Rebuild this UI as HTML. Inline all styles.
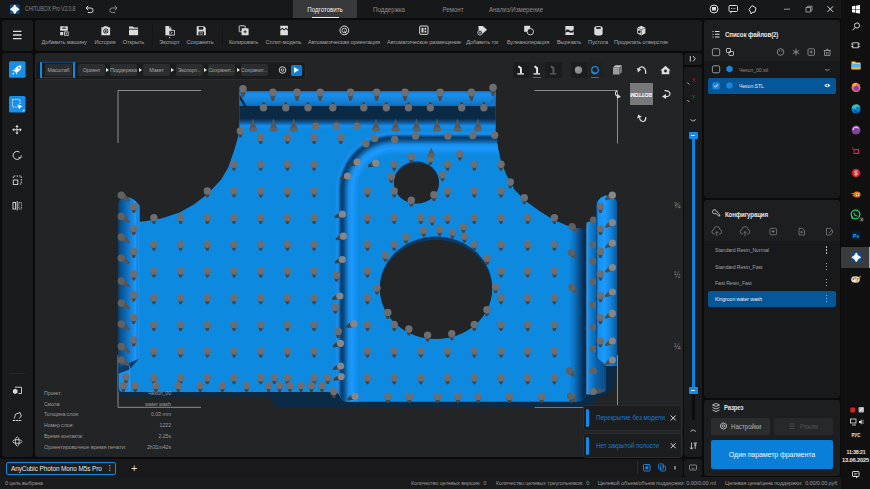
<!DOCTYPE html>
<html lang="ru"><head><meta charset="utf-8"><title>CHITUBOX Pro V2.0.8</title>
<style>

*{box-sizing:border-box;margin:0;padding:0}
html,body{width:870px;height:489px;overflow:hidden;background:#0b0b0c}
body{font-family:"Liberation Sans",sans-serif;color:#a9a9a9;font-size:6px;line-height:1}
#app{position:relative;width:870px;height:489px;overflow:hidden;background:#0b0b0c}
.abs{position:absolute}
.pn{position:absolute;background:#1a1b1d;border-radius:3px}
.t{position:absolute;white-space:nowrap;transform-origin:0 0;transform:scaleX(var(--sx,1))}
.c{transform-origin:50% 0;transform:translateX(-50%) scaleX(var(--sx,1))}
.r{transform-origin:100% 0;transform:translateX(-100%) scaleX(var(--sx,1))}
svg{position:absolute;overflow:visible}
#title{left:0;top:0;width:841px;height:18px;background:#17181a}
#tabact{left:293px;top:0;width:64px;height:18px;background:#38393b}
.tab{top:6px;font-size:7px;color:#8e8e8e;--sx:.875}
.tl{top:40px;font-size:5.6px;color:#a6a6a6;letter-spacing:-0.1px}
.wf{position:absolute;top:64px;height:12px;width:27px;background:#2c2d2f;border-radius:2px;font-size:5.4px;color:#a3a3a3;text-align:center;line-height:12px;white-space:nowrap;overflow:hidden;letter-spacing:-0.15px}
.wa{position:absolute;top:67.5px;width:0;height:0;border-left:3px solid #e8e8e8;border-top:2.5px solid transparent;border-bottom:2.5px solid transparent}
.info{font-size:6px;color:#9b9b9b;letter-spacing:-0.1px;--sx:.885}
.st{top:480.6px;font-size:5.6px;color:#9a9a9a;letter-spacing:-0.1px;--sx:.96}
.li{font-size:6px;color:#a2a2a2;letter-spacing:-0.1px;--sx:.87}
.dots{position:absolute;width:1.3px;height:1.3px;background:#d8d8d8;border-radius:50%;box-shadow:0 3px 0 #d8d8d8,0 6px 0 #d8d8d8}

</style></head>
<body>
<div id="app">
<div class="abs" id="title"></div>
<div class="abs" id="tabact"></div>
<div class="abs" style="left:312px;top:17px;width:27px;height:1px;background:#e6e6e6"></div>
<div class="t" style="left:24.5px;top:6px;font-size:6.3px;color:#858585;letter-spacing:-0.2px;--sx:.835">CHITUBOX Pro V2.0.8</div>
<div class="t tab c" style="left:325px;color:#f0f0f0">Подготовить</div>
<div class="t tab c" style="left:389px">Поддержка</div>
<div class="t tab c" style="left:453px">Ремонт</div>
<div class="t tab c" style="left:516px">Анализ/Измерение</div>
<div class="pn" style="left:2px;top:20px;width:31px;height:30.5px"></div>
<div class="pn" style="left:34.5px;top:20px;width:667.5px;height:30.5px"></div>
<div class="pn" style="left:2px;top:52.5px;width:31px;height:404.5px"></div>
<div class="abs" id="vp" style="left:34.5px;top:52.5px;width:648px;height:404.5px;background:#232426;border-radius:3px;overflow:hidden">
<svg width="870" height="489" viewBox="0 0 870 489" style="left:-34.5px;top:-52.5px">
<defs>
<linearGradient id="gTop" x1="0" y1="0" x2="0" y2="1">
<stop offset="0" stop-color="#0a5a9c"/><stop offset="0.1" stop-color="#1483dc"/><stop offset="0.3" stop-color="#1a8fec"/><stop offset="0.75" stop-color="#137cd0"/><stop offset="1" stop-color="#0e68b0"/></linearGradient>
<linearGradient id="gTop2" x1="0" y1="0" x2="0" y2="1">
<stop offset="0" stop-color="#0b2f50"/><stop offset="0.35" stop-color="#0c5a9c"/><stop offset="0.7" stop-color="#1690f2"/><stop offset="1" stop-color="#0e89e0"/></linearGradient>
<linearGradient id="gLW" x1="0" y1="0" x2="1" y2="0">
<stop offset="0" stop-color="#09406e"/><stop offset="0.12" stop-color="#0a5290"/><stop offset="0.4" stop-color="#0e6fc0"/><stop offset="0.65" stop-color="#1588e4"/><stop offset="0.8" stop-color="#1e98f8"/><stop offset="0.88" stop-color="#1283da"/><stop offset="0.94" stop-color="#178ff0"/><stop offset="1" stop-color="#0e89e0"/></linearGradient>
<linearGradient id="gRG" x1="0" y1="0" x2="1" y2="0">
<stop offset="0" stop-color="#0e89e0"/><stop offset="0.3" stop-color="#0c72c0"/><stop offset="0.6" stop-color="#094c86"/><stop offset="0.85" stop-color="#062e54"/><stop offset="1" stop-color="#052848"/></linearGradient>
<linearGradient id="gRI" gradientUnits="userSpaceOnUse" x1="586.5" y1="0" x2="606" y2="0">
<stop offset="0" stop-color="#2aa2ff"/><stop offset="0.12" stop-color="#1488e2"/><stop offset="0.28" stop-color="#0e78c8"/><stop offset="0.5" stop-color="#0b62a8"/><stop offset="1" stop-color="#0a4a84"/></linearGradient>
<linearGradient id="gRW" x1="0" y1="0" x2="1" y2="0">
<stop offset="0" stop-color="#0c6cb8"/><stop offset="0.1" stop-color="#1490ee"/><stop offset="0.4" stop-color="#1c9aff"/><stop offset="0.7" stop-color="#1282d8"/><stop offset="1" stop-color="#0a5898"/></linearGradient>
<linearGradient id="gRV" x1="0" y1="0" x2="1" y2="0"><stop offset="0.000" stop-color="#0e89e0"/><stop offset="0.060" stop-color="#1288e2"/><stop offset="0.120" stop-color="#1a90ea"/><stop offset="0.180" stop-color="#1584dc"/><stop offset="0.240" stop-color="#0c5a9c"/><stop offset="0.300" stop-color="#0a3d6e"/><stop offset="0.360" stop-color="#0a4274"/><stop offset="0.460" stop-color="#0e62a8"/><stop offset="0.580" stop-color="#178ee8"/><stop offset="0.720" stop-color="#1c9aff"/><stop offset="0.860" stop-color="#1590f0"/><stop offset="1.000" stop-color="#0e89e0"/></linearGradient>
<linearGradient id="gRH" x1="0" y1="0" x2="0" y2="1"><stop offset="0.000" stop-color="#0e89e0"/><stop offset="0.060" stop-color="#1288e2"/><stop offset="0.120" stop-color="#1a90ea"/><stop offset="0.180" stop-color="#1584dc"/><stop offset="0.240" stop-color="#0c5a9c"/><stop offset="0.300" stop-color="#0a3d6e"/><stop offset="0.360" stop-color="#0a4274"/><stop offset="0.460" stop-color="#0e62a8"/><stop offset="0.580" stop-color="#178ee8"/><stop offset="0.720" stop-color="#1c9aff"/><stop offset="0.860" stop-color="#1590f0"/><stop offset="1.000" stop-color="#0e89e0"/></linearGradient>
<radialGradient id="gRC" gradientUnits="userSpaceOnUse" cx="394" cy="190" r="60"><stop offset="0.5833" stop-color="#0e89e0"/><stop offset="0.6417" stop-color="#1590f0"/><stop offset="0.7000" stop-color="#1c9aff"/><stop offset="0.7583" stop-color="#178ee8"/><stop offset="0.8083" stop-color="#0e62a8"/><stop offset="0.8500" stop-color="#0a4274"/><stop offset="0.8750" stop-color="#0a3d6e"/><stop offset="0.9000" stop-color="#0c5a9c"/><stop offset="0.9250" stop-color="#1584dc"/><stop offset="0.9500" stop-color="#1a90ea"/><stop offset="0.9750" stop-color="#1288e2"/><stop offset="1.0000" stop-color="#0e89e0"/></radialGradient>
<filter id="b1" x="-20%" y="-20%" width="140%" height="140%"><feGaussianBlur stdDeviation="1.4"/></filter>
<filter id="b2" x="-20%" y="-20%" width="140%" height="140%"><feGaussianBlur stdDeviation="2.2"/></filter>
<clipPath id="body"><path id="bodyp" d="M239.500 91H495.500V134L496.400 138 498.300 150 500.900 160.400 506.100 174.300 514.800 190 526.900 202.100 539.100 210.800 553 219.500 566.900 225.600 577.300 228.600 586.500 229.300V393Q585 401.800 574 401.800H348Q341 401.500 339 394.500Q338 392 335 392H124.500Q118.700 392 118.700 386V222L138.700 221.800 144.800 221.300 162.100 218.300 179.500 212.600 193.400 204.800 207.300 194.300 221.200 179.500 228.200 167.400 234.300 150 238 137 239.500 128Z"/></clipPath>
</defs>
<path d="M118 143V90.500H201M534.500 90.500H617.500V143.500M118 355V407.300H201M534.500 407.300H617.500V355" fill="none" stroke="#8c8c8c" stroke-width="1"/>
<path d="M119 380V390Q119 396.500 125 396.500H267L277 407H582Q596 406.500 597 397L600 396.500Q616 394 616.500 374V366H606L586.500 380Z" fill="#0b2a46"/>
<path d="M239.500 91H495.500V134L496.400 138 498.300 150 500.900 160.400 506.100 174.300 514.800 190 526.900 202.100 539.100 210.800 553 219.500 566.900 225.600 577.300 228.600 586.500 229.300V393Q585 401.800 574 401.800H348Q341 401.500 339 394.500Q338 392 335 392H124.500Q118.700 392 118.700 386V222L138.700 221.800 144.800 221.300 162.100 218.300 179.500 212.600 193.400 204.800 207.300 194.300 221.200 179.500 228.200 167.400 234.300 150 238 137 239.500 128Z" fill="#0e89e0"/>
<g clip-path="url(#body)">
<rect x="239" y="90.500" width="258" height="16" fill="url(#gTop)"/>
<rect x="239" y="106" width="258" height="13.500" fill="#0b2a46"/>
<rect x="239" y="119" width="258" height="10" fill="url(#gTop2)"/>
<path d="M239.500 94L247.500 107.500L245 108L239.500 99Z" fill="#0b2a46"/>
<path d="M495.500 94L488 106.500H495.500Z" fill="#1a74c0"/>
<rect x="334" y="189.500" width="25" height="222" fill="url(#gRV)"/>
<rect x="393.500" y="130" width="110" height="25" fill="url(#gRH)"/>
<path d="M334 190V130H394V190Z" fill="url(#gRC)"/>
<rect x="569" y="215" width="17.500" height="195" fill="url(#gRG)"/>
</g>
<ellipse cx="416.500" cy="182.300" rx="22.600" ry="21" fill="#0b3a66"/>
<ellipse cx="416.500" cy="183.300" rx="22.400" ry="20.300" fill="#232426"/>
<ellipse cx="436" cy="287.500" rx="56.200" ry="51" fill="#0b3a66"/>
<ellipse cx="436" cy="289.500" rx="56" ry="49.500" fill="#232426"/>
<path d="M118.200 392V204Q118.500 198 125.500 196.800Q134 197 139.800 206V392Z" fill="url(#gLW)"/>
<path d="M118.700 367.500L139.500 358.500L130 369.500L118.700 373.500Z" fill="#0b3c6a"/>
<path d="M118.700 373.500L130 369.500L139.500 358.500V392H124Q118.700 392 118.700 386Z" fill="#1590f0"/>
<path d="M130 392V369.500L139.500 358.500V392Z" fill="#0e89e0"/>
<path d="M129.700 366V391" stroke="#3aa4ff" stroke-width="0.800"/>
<path d="M586.500 394.500V225Q586.500 221.300 591 221.300H596.700V358L606 366V391Q600 394.500 592 394.500Z" fill="url(#gRI)"/>
<circle cx="593.3" cy="219.9" r="3.5" fill="#606264"/>
<circle cx="593.3" cy="244.6" r="3.5" fill="#606264"/>
<circle cx="593.3" cy="261.3" r="3.5" fill="#606264"/>
<circle cx="593.3" cy="281.4" r="3.5" fill="#606264"/>
<circle cx="593.3" cy="304.7" r="3.5" fill="#606264"/>
<circle cx="593.3" cy="327" r="3.5" fill="#606264"/>
<circle cx="593.3" cy="349" r="3.5" fill="#606264"/>
<circle cx="593.3" cy="371" r="3.5" fill="#606264"/>
<path d="M596.200 358V205Q597 198.500 605.200 195.400Q614 196 617 201V366H606Z" fill="url(#gRW)"/>
<path d="M596.700 200V358L606 366" fill="none" stroke="#0a3d6e" stroke-width="0.800"/>
<path d="M586.800 222V394" stroke="#5a7f9e" stroke-width="0.500"/>
<circle cx="394.7" cy="139.5" r="3.7" fill="#6c6e71"/>
<circle cx="415.6" cy="136" r="3.7" fill="#6c6e71"/>
<circle cx="447.8" cy="136" r="3.7" fill="#6c6e71"/>
<circle cx="472.8" cy="135.5" r="3.7" fill="#6c6e71"/>
<circle cx="494.7" cy="135.3" r="3.7" fill="#6c6e71"/>
<circle cx="365.9" cy="143.7" r="3.7" fill="#6c6e71"/>
<circle cx="374.6" cy="138.5" r="3.7" fill="#6c6e71"/>
<path d="M236.9 131.0L239.4 137.5L241.4 137.5L243.9 131.0Z" fill="#424446"/><circle cx="240.4" cy="131.0" r="3.7" fill="#6c6e71"/>
<path d="M257.2 137.5L259.7 144.0L261.7 144.0L264.2 137.5Z" fill="#424446"/><circle cx="260.7" cy="137.5" r="3.7" fill="#6c6e71"/>
<path d="M283.9 137.5L286.4 144.0L288.4 144.0L290.9 137.5Z" fill="#424446"/><circle cx="287.4" cy="137.5" r="3.7" fill="#6c6e71"/>
<path d="M310.6 137.5L313.1 144.0L315.1 144.0L317.6 137.5Z" fill="#424446"/><circle cx="314.1" cy="137.5" r="3.7" fill="#6c6e71"/>
<path d="M337.3 137.5L339.8 144.0L341.8 144.0L344.3 137.5Z" fill="#424446"/><circle cx="340.8" cy="137.5" r="3.7" fill="#6c6e71"/>
<path d="M456.4 153.9L458.9 160.4L460.9 160.4L463.4 153.9Z" fill="#424446"/><circle cx="459.9" cy="153.9" r="3.7" fill="#6c6e71"/>
<path d="M407.8 156.5L410.3 163.0L412.3 163.0L414.8 156.5Z" fill="#424446"/><circle cx="411.3" cy="156.5" r="3.7" fill="#6c6e71"/>
<path d="M426.9 158.6L429.4 165.1L431.4 165.1L433.9 158.6Z" fill="#424446"/><circle cx="430.4" cy="158.6" r="3.7" fill="#6c6e71"/>
<path d="M230.5 164.2L233.0 170.7L235.0 170.7L237.5 164.2Z" fill="#424446"/><circle cx="234.0" cy="164.2" r="3.7" fill="#6c6e71"/>
<path d="M257.2 164.2L259.7 170.7L261.7 170.7L264.2 164.2Z" fill="#424446"/><circle cx="260.7" cy="164.2" r="3.7" fill="#6c6e71"/>
<path d="M283.9 164.2L286.4 170.7L288.4 170.7L290.9 164.2Z" fill="#424446"/><circle cx="287.4" cy="164.2" r="3.7" fill="#6c6e71"/>
<path d="M310.6 164.2L313.1 170.7L315.1 170.7L317.6 164.2Z" fill="#424446"/><circle cx="314.1" cy="164.2" r="3.7" fill="#6c6e71"/>
<path d="M390.7 164.2L393.2 170.7L395.2 170.7L397.7 164.2Z" fill="#424446"/><circle cx="394.2" cy="164.2" r="3.7" fill="#6c6e71"/>
<path d="M444.1 164.2L446.6 170.7L448.6 170.7L451.1 164.2Z" fill="#424446"/><circle cx="447.6" cy="164.2" r="3.7" fill="#6c6e71"/>
<path d="M470.8 164.2L473.3 170.7L475.3 170.7L477.8 164.2Z" fill="#424446"/><circle cx="474.3" cy="164.2" r="3.7" fill="#6c6e71"/>
<path d="M497.5 164.2L500.0 170.7L502.0 170.7L504.5 164.2Z" fill="#424446"/><circle cx="501.0" cy="164.2" r="3.7" fill="#6c6e71"/>
<path d="M439.0 174.8L441.5 181.3L443.5 181.3L446.0 174.8Z" fill="#424446"/><circle cx="442.5" cy="174.8" r="3.7" fill="#6c6e71"/>
<path d="M387.8 176.5L390.3 183.0L392.3 183.0L394.8 176.5Z" fill="#424446"/><circle cx="391.3" cy="176.5" r="3.7" fill="#6c6e71"/>
<path d="M506.8 182.0L509.3 188.5L511.3 188.5L513.8 182.0Z" fill="#424446"/><circle cx="510.3" cy="182.0" r="3.7" fill="#6c6e71"/>
<path d="M203.8 190.9L206.3 197.4L208.3 197.4L210.8 190.9Z" fill="#424446"/><circle cx="207.3" cy="190.9" r="3.7" fill="#6c6e71"/>
<path d="M230.5 190.9L233.0 197.4L235.0 197.4L237.5 190.9Z" fill="#424446"/><circle cx="234.0" cy="190.9" r="3.7" fill="#6c6e71"/>
<path d="M257.2 190.9L259.7 197.4L261.7 197.4L264.2 190.9Z" fill="#424446"/><circle cx="260.7" cy="190.9" r="3.7" fill="#6c6e71"/>
<path d="M283.9 190.9L286.4 197.4L288.4 197.4L290.9 190.9Z" fill="#424446"/><circle cx="287.4" cy="190.9" r="3.7" fill="#6c6e71"/>
<path d="M310.6 190.9L313.1 197.4L315.1 197.4L317.6 190.9Z" fill="#424446"/><circle cx="314.1" cy="190.9" r="3.7" fill="#6c6e71"/>
<path d="M364.0 190.9L366.5 197.4L368.5 197.4L371.0 190.9Z" fill="#424446"/><circle cx="367.5" cy="190.9" r="3.7" fill="#6c6e71"/>
<path d="M390.7 190.9L393.2 197.4L395.2 197.4L397.7 190.9Z" fill="#424446"/><circle cx="394.2" cy="190.9" r="3.7" fill="#6c6e71"/>
<path d="M444.1 190.9L446.6 197.4L448.6 197.4L451.1 190.9Z" fill="#424446"/><circle cx="447.6" cy="190.9" r="3.7" fill="#6c6e71"/>
<path d="M470.8 190.9L473.3 197.4L475.3 197.4L477.8 190.9Z" fill="#424446"/><circle cx="474.3" cy="190.9" r="3.7" fill="#6c6e71"/>
<path d="M497.5 190.9L500.0 197.4L502.0 197.4L504.5 190.9Z" fill="#424446"/><circle cx="501.0" cy="190.9" r="3.7" fill="#6c6e71"/>
<path d="M430.4 194.7L432.9 201.2L434.9 201.2L437.4 194.7Z" fill="#424446"/><circle cx="433.9" cy="194.7" r="3.7" fill="#6c6e71"/>
<path d="M520.8 197.8L523.3 204.3L525.3 204.3L527.8 197.8Z" fill="#424446"/><circle cx="524.3" cy="197.8" r="3.7" fill="#6c6e71"/>
<path d="M407.8 200.3L410.3 206.8L412.3 206.8L414.8 200.3Z" fill="#424446"/><circle cx="411.3" cy="200.3" r="3.7" fill="#6c6e71"/>
<path d="M130.3 206.5L132.8 213.0L134.8 213.0L137.3 206.5Z" fill="#424446"/><circle cx="133.8" cy="206.5" r="3.7" fill="#6c6e71"/>
<path d="M597.0 206.5L599.5 213.0L601.5 213.0L604.0 206.5Z" fill="#424446"/><circle cx="600.5" cy="206.5" r="3.7" fill="#6c6e71"/>
<path d="M150.4 217.6L152.9 224.1L154.9 224.1L157.4 217.6Z" fill="#424446"/><circle cx="153.9" cy="217.6" r="3.7" fill="#6c6e71"/>
<path d="M177.1 217.6L179.6 224.1L181.6 224.1L184.1 217.6Z" fill="#424446"/><circle cx="180.6" cy="217.6" r="3.7" fill="#6c6e71"/>
<path d="M203.8 217.6L206.3 224.1L208.3 224.1L210.8 217.6Z" fill="#424446"/><circle cx="207.3" cy="217.6" r="3.7" fill="#6c6e71"/>
<path d="M230.5 217.6L233.0 224.1L235.0 224.1L237.5 217.6Z" fill="#424446"/><circle cx="234.0" cy="217.6" r="3.7" fill="#6c6e71"/>
<path d="M257.2 217.6L259.7 224.1L261.7 224.1L264.2 217.6Z" fill="#424446"/><circle cx="260.7" cy="217.6" r="3.7" fill="#6c6e71"/>
<path d="M283.9 217.6L286.4 224.1L288.4 224.1L290.9 217.6Z" fill="#424446"/><circle cx="287.4" cy="217.6" r="3.7" fill="#6c6e71"/>
<path d="M310.6 217.6L313.1 224.1L315.1 224.1L317.6 217.6Z" fill="#424446"/><circle cx="314.1" cy="217.6" r="3.7" fill="#6c6e71"/>
<path d="M364.0 217.6L366.5 224.1L368.5 224.1L371.0 217.6Z" fill="#424446"/><circle cx="367.5" cy="217.6" r="3.7" fill="#6c6e71"/>
<path d="M390.7 217.6L393.2 224.1L395.2 224.1L397.7 217.6Z" fill="#424446"/><circle cx="394.2" cy="217.6" r="3.7" fill="#6c6e71"/>
<path d="M417.4 217.6L419.9 224.1L421.9 224.1L424.4 217.6Z" fill="#424446"/><circle cx="420.9" cy="217.6" r="3.7" fill="#6c6e71"/>
<path d="M444.1 217.6L446.6 224.1L448.6 224.1L451.1 217.6Z" fill="#424446"/><circle cx="447.6" cy="217.6" r="3.7" fill="#6c6e71"/>
<path d="M470.8 217.6L473.3 224.1L475.3 224.1L477.8 217.6Z" fill="#424446"/><circle cx="474.3" cy="217.6" r="3.7" fill="#6c6e71"/>
<path d="M497.5 217.6L500.0 224.1L502.0 224.1L504.5 217.6Z" fill="#424446"/><circle cx="501.0" cy="217.6" r="3.7" fill="#6c6e71"/>
<path d="M524.2 217.6L526.7 224.1L528.7 224.1L531.2 217.6Z" fill="#424446"/><circle cx="527.7" cy="217.6" r="3.7" fill="#6c6e71"/>
<path d="M550.9 217.6L553.4 224.1L555.4 224.1L557.9 217.6Z" fill="#424446"/><circle cx="554.4" cy="217.6" r="3.7" fill="#6c6e71"/>
<path d="M428.8 219.1L431.3 225.6L433.3 225.6L435.8 219.1Z" fill="#424446"/><circle cx="432.3" cy="219.1" r="3.7" fill="#6c6e71"/>
<path d="M459.9 226.6L462.4 233.1L464.4 233.1L466.9 226.6Z" fill="#424446"/><circle cx="463.4" cy="226.6" r="3.7" fill="#6c6e71"/>
<path d="M130.3 228.6L132.8 235.1L134.8 235.1L137.3 228.6Z" fill="#424446"/><circle cx="133.8" cy="228.6" r="3.7" fill="#6c6e71"/>
<path d="M597.0 228.6L599.5 235.1L601.5 235.1L604.0 228.6Z" fill="#424446"/><circle cx="600.5" cy="228.6" r="3.7" fill="#6c6e71"/>
<path d="M436.2 229.4L438.7 235.9L440.7 235.9L443.2 229.4Z" fill="#424446"/><circle cx="439.7" cy="229.4" r="3.7" fill="#6c6e71"/>
<path d="M420.2 230.2L422.7 236.7L424.7 236.7L427.2 230.2Z" fill="#424446"/><circle cx="423.7" cy="230.2" r="3.7" fill="#6c6e71"/>
<path d="M448.9 232.1L451.4 238.6L453.4 238.6L455.9 232.1Z" fill="#424446"/><circle cx="452.4" cy="232.1" r="3.7" fill="#6c6e71"/>
<path d="M461.0 236.3L463.5 242.8L465.5 242.8L468.0 236.3Z" fill="#424446"/><circle cx="464.5" cy="236.3" r="3.7" fill="#6c6e71"/>
<path d="M402.5 237.0L405.0 243.5L407.0 243.5L409.5 237.0Z" fill="#424446"/><circle cx="406.0" cy="237.0" r="3.7" fill="#6c6e71"/>
<path d="M150.4 244.3L152.9 250.8L154.9 250.8L157.4 244.3Z" fill="#424446"/><circle cx="153.9" cy="244.3" r="3.7" fill="#6c6e71"/>
<path d="M177.1 244.3L179.6 250.8L181.6 250.8L184.1 244.3Z" fill="#424446"/><circle cx="180.6" cy="244.3" r="3.7" fill="#6c6e71"/>
<path d="M203.8 244.3L206.3 250.8L208.3 250.8L210.8 244.3Z" fill="#424446"/><circle cx="207.3" cy="244.3" r="3.7" fill="#6c6e71"/>
<path d="M230.5 244.3L233.0 250.8L235.0 250.8L237.5 244.3Z" fill="#424446"/><circle cx="234.0" cy="244.3" r="3.7" fill="#6c6e71"/>
<path d="M257.2 244.3L259.7 250.8L261.7 250.8L264.2 244.3Z" fill="#424446"/><circle cx="260.7" cy="244.3" r="3.7" fill="#6c6e71"/>
<path d="M283.9 244.3L286.4 250.8L288.4 250.8L290.9 244.3Z" fill="#424446"/><circle cx="287.4" cy="244.3" r="3.7" fill="#6c6e71"/>
<path d="M310.6 244.3L313.1 250.8L315.1 250.8L317.6 244.3Z" fill="#424446"/><circle cx="314.1" cy="244.3" r="3.7" fill="#6c6e71"/>
<path d="M364.0 244.3L366.5 250.8L368.5 250.8L371.0 244.3Z" fill="#424446"/><circle cx="367.5" cy="244.3" r="3.7" fill="#6c6e71"/>
<path d="M390.7 244.3L393.2 250.8L395.2 250.8L397.7 244.3Z" fill="#424446"/><circle cx="394.2" cy="244.3" r="3.7" fill="#6c6e71"/>
<path d="M470.8 244.3L473.3 250.8L475.3 250.8L477.8 244.3Z" fill="#424446"/><circle cx="474.3" cy="244.3" r="3.7" fill="#6c6e71"/>
<path d="M497.5 244.3L500.0 250.8L502.0 250.8L504.5 244.3Z" fill="#424446"/><circle cx="501.0" cy="244.3" r="3.7" fill="#6c6e71"/>
<path d="M524.2 244.3L526.7 250.8L528.7 250.8L531.2 244.3Z" fill="#424446"/><circle cx="527.7" cy="244.3" r="3.7" fill="#6c6e71"/>
<path d="M550.9 244.3L553.4 250.8L555.4 250.8L557.9 244.3Z" fill="#424446"/><circle cx="554.4" cy="244.3" r="3.7" fill="#6c6e71"/>
<path d="M130.3 251.5L132.8 258.0L134.8 258.0L137.3 251.5Z" fill="#424446"/><circle cx="133.8" cy="251.5" r="3.7" fill="#6c6e71"/>
<path d="M597.0 251.5L599.5 258.0L601.5 258.0L604.0 251.5Z" fill="#424446"/><circle cx="600.5" cy="251.5" r="3.7" fill="#6c6e71"/>
<path d="M381.8 255.3L384.3 261.8L386.3 261.8L388.8 255.3Z" fill="#424446"/><circle cx="385.3" cy="255.3" r="3.7" fill="#6c6e71"/>
<path d="M483.7 258.3L486.2 264.8L488.2 264.8L490.7 258.3Z" fill="#424446"/><circle cx="487.2" cy="258.3" r="3.7" fill="#6c6e71"/>
<path d="M150.4 271.0L152.9 277.5L154.9 277.5L157.4 271.0Z" fill="#424446"/><circle cx="153.9" cy="271.0" r="3.7" fill="#6c6e71"/>
<path d="M177.1 271.0L179.6 277.5L181.6 277.5L184.1 271.0Z" fill="#424446"/><circle cx="180.6" cy="271.0" r="3.7" fill="#6c6e71"/>
<path d="M203.8 271.0L206.3 277.5L208.3 277.5L210.8 271.0Z" fill="#424446"/><circle cx="207.3" cy="271.0" r="3.7" fill="#6c6e71"/>
<path d="M230.5 271.0L233.0 277.5L235.0 277.5L237.5 271.0Z" fill="#424446"/><circle cx="234.0" cy="271.0" r="3.7" fill="#6c6e71"/>
<path d="M257.2 271.0L259.7 277.5L261.7 277.5L264.2 271.0Z" fill="#424446"/><circle cx="260.7" cy="271.0" r="3.7" fill="#6c6e71"/>
<path d="M283.9 271.0L286.4 277.5L288.4 277.5L290.9 271.0Z" fill="#424446"/><circle cx="287.4" cy="271.0" r="3.7" fill="#6c6e71"/>
<path d="M310.6 271.0L313.1 277.5L315.1 277.5L317.6 271.0Z" fill="#424446"/><circle cx="314.1" cy="271.0" r="3.7" fill="#6c6e71"/>
<path d="M364.0 271.0L366.5 277.5L368.5 277.5L371.0 271.0Z" fill="#424446"/><circle cx="367.5" cy="271.0" r="3.7" fill="#6c6e71"/>
<path d="M497.5 271.0L500.0 277.5L502.0 277.5L504.5 271.0Z" fill="#424446"/><circle cx="501.0" cy="271.0" r="3.7" fill="#6c6e71"/>
<path d="M524.2 271.0L526.7 277.5L528.7 277.5L531.2 271.0Z" fill="#424446"/><circle cx="527.7" cy="271.0" r="3.7" fill="#6c6e71"/>
<path d="M550.9 271.0L553.4 277.5L555.4 277.5L557.9 271.0Z" fill="#424446"/><circle cx="554.4" cy="271.0" r="3.7" fill="#6c6e71"/>
<path d="M130.3 274.0L132.8 280.5L134.8 280.5L137.3 274.0Z" fill="#424446"/><circle cx="133.8" cy="274.0" r="3.7" fill="#6c6e71"/>
<path d="M597.0 274.0L599.5 280.5L601.5 280.5L604.0 274.0Z" fill="#424446"/><circle cx="600.5" cy="274.0" r="3.7" fill="#6c6e71"/>
<path d="M332.9 275.2L335.4 281.7L337.4 281.7L339.9 275.2Z" fill="#424446"/><circle cx="336.4" cy="275.2" r="3.7" fill="#6c6e71"/>
<path d="M492.0 286.8L494.5 293.3L496.5 293.3L499.0 286.8Z" fill="#424446"/><circle cx="495.5" cy="286.8" r="3.7" fill="#6c6e71"/>
<path d="M373.5 288.1L376.0 294.6L378.0 294.6L380.5 288.1Z" fill="#424446"/><circle cx="377.0" cy="288.1" r="3.7" fill="#6c6e71"/>
<path d="M130.3 295.0L132.8 301.5L134.8 301.5L137.3 295.0Z" fill="#424446"/><circle cx="133.8" cy="295.0" r="3.7" fill="#6c6e71"/>
<path d="M597.0 295.7L599.5 302.2L601.5 302.2L604.0 295.7Z" fill="#424446"/><circle cx="600.5" cy="295.7" r="3.7" fill="#6c6e71"/>
<path d="M150.4 297.7L152.9 304.2L154.9 304.2L157.4 297.7Z" fill="#424446"/><circle cx="153.9" cy="297.7" r="3.7" fill="#6c6e71"/>
<path d="M177.1 297.7L179.6 304.2L181.6 304.2L184.1 297.7Z" fill="#424446"/><circle cx="180.6" cy="297.7" r="3.7" fill="#6c6e71"/>
<path d="M203.8 297.7L206.3 304.2L208.3 304.2L210.8 297.7Z" fill="#424446"/><circle cx="207.3" cy="297.7" r="3.7" fill="#6c6e71"/>
<path d="M230.5 297.7L233.0 304.2L235.0 304.2L237.5 297.7Z" fill="#424446"/><circle cx="234.0" cy="297.7" r="3.7" fill="#6c6e71"/>
<path d="M257.2 297.7L259.7 304.2L261.7 304.2L264.2 297.7Z" fill="#424446"/><circle cx="260.7" cy="297.7" r="3.7" fill="#6c6e71"/>
<path d="M283.9 297.7L286.4 304.2L288.4 304.2L290.9 297.7Z" fill="#424446"/><circle cx="287.4" cy="297.7" r="3.7" fill="#6c6e71"/>
<path d="M310.6 297.7L313.1 304.2L315.1 304.2L317.6 297.7Z" fill="#424446"/><circle cx="314.1" cy="297.7" r="3.7" fill="#6c6e71"/>
<path d="M364.0 297.7L366.5 304.2L368.5 304.2L371.0 297.7Z" fill="#424446"/><circle cx="367.5" cy="297.7" r="3.7" fill="#6c6e71"/>
<path d="M497.5 297.7L500.0 304.2L502.0 304.2L504.5 297.7Z" fill="#424446"/><circle cx="501.0" cy="297.7" r="3.7" fill="#6c6e71"/>
<path d="M524.2 297.7L526.7 304.2L528.7 304.2L531.2 297.7Z" fill="#424446"/><circle cx="527.7" cy="297.7" r="3.7" fill="#6c6e71"/>
<path d="M550.9 297.7L553.4 304.2L555.4 304.2L557.9 297.7Z" fill="#424446"/><circle cx="554.4" cy="297.7" r="3.7" fill="#6c6e71"/>
<path d="M331.8 307.2L334.3 313.7L336.3 313.7L338.8 307.2Z" fill="#424446"/><circle cx="335.3" cy="307.2" r="3.7" fill="#6c6e71"/>
<path d="M483.4 309.7L485.9 316.2L487.9 316.2L490.4 309.7Z" fill="#424446"/><circle cx="486.9" cy="309.7" r="3.7" fill="#6c6e71"/>
<path d="M384.3 312.4L386.8 318.9L388.8 318.9L391.3 312.4Z" fill="#424446"/><circle cx="387.8" cy="312.4" r="3.7" fill="#6c6e71"/>
<path d="M130.3 317.6L132.8 324.1L134.8 324.1L137.3 317.6Z" fill="#424446"/><circle cx="133.8" cy="317.6" r="3.7" fill="#6c6e71"/>
<path d="M597.0 317.6L599.5 324.1L601.5 324.1L604.0 317.6Z" fill="#424446"/><circle cx="600.5" cy="317.6" r="3.7" fill="#6c6e71"/>
<path d="M150.4 324.4L152.9 330.9L154.9 330.9L157.4 324.4Z" fill="#424446"/><circle cx="153.9" cy="324.4" r="3.7" fill="#6c6e71"/>
<path d="M177.1 324.4L179.6 330.9L181.6 330.9L184.1 324.4Z" fill="#424446"/><circle cx="180.6" cy="324.4" r="3.7" fill="#6c6e71"/>
<path d="M203.8 324.4L206.3 330.9L208.3 330.9L210.8 324.4Z" fill="#424446"/><circle cx="207.3" cy="324.4" r="3.7" fill="#6c6e71"/>
<path d="M230.5 324.4L233.0 330.9L235.0 330.9L237.5 324.4Z" fill="#424446"/><circle cx="234.0" cy="324.4" r="3.7" fill="#6c6e71"/>
<path d="M257.2 324.4L259.7 330.9L261.7 330.9L264.2 324.4Z" fill="#424446"/><circle cx="260.7" cy="324.4" r="3.7" fill="#6c6e71"/>
<path d="M283.9 324.4L286.4 330.9L288.4 330.9L290.9 324.4Z" fill="#424446"/><circle cx="287.4" cy="324.4" r="3.7" fill="#6c6e71"/>
<path d="M310.6 324.4L313.1 330.9L315.1 330.9L317.6 324.4Z" fill="#424446"/><circle cx="314.1" cy="324.4" r="3.7" fill="#6c6e71"/>
<path d="M364.0 324.4L366.5 330.9L368.5 330.9L371.0 324.4Z" fill="#424446"/><circle cx="367.5" cy="324.4" r="3.7" fill="#6c6e71"/>
<path d="M390.7 324.4L393.2 330.9L395.2 330.9L397.7 324.4Z" fill="#424446"/><circle cx="394.2" cy="324.4" r="3.7" fill="#6c6e71"/>
<path d="M470.8 324.4L473.3 330.9L475.3 330.9L477.8 324.4Z" fill="#424446"/><circle cx="474.3" cy="324.4" r="3.7" fill="#6c6e71"/>
<path d="M497.5 324.4L500.0 330.9L502.0 330.9L504.5 324.4Z" fill="#424446"/><circle cx="501.0" cy="324.4" r="3.7" fill="#6c6e71"/>
<path d="M524.2 324.4L526.7 330.9L528.7 330.9L531.2 324.4Z" fill="#424446"/><circle cx="527.7" cy="324.4" r="3.7" fill="#6c6e71"/>
<path d="M550.9 324.4L553.4 330.9L555.4 330.9L557.9 324.4Z" fill="#424446"/><circle cx="554.4" cy="324.4" r="3.7" fill="#6c6e71"/>
<path d="M405.3 329.0L407.8 335.5L409.8 335.5L412.3 329.0Z" fill="#424446"/><circle cx="408.8" cy="329.0" r="3.7" fill="#6c6e71"/>
<path d="M334.6 331.5L337.1 338.0L339.1 338.0L341.6 331.5Z" fill="#424446"/><circle cx="338.1" cy="331.5" r="3.7" fill="#6c6e71"/>
<path d="M448.3 333.7L450.8 340.2L452.8 340.2L455.3 333.7Z" fill="#424446"/><circle cx="451.8" cy="333.7" r="3.7" fill="#6c6e71"/>
<path d="M424.1 335.1L426.6 341.6L428.6 341.6L431.1 335.1Z" fill="#424446"/><circle cx="427.6" cy="335.1" r="3.7" fill="#6c6e71"/>
<path d="M130.3 340.0L132.8 346.5L134.8 346.5L137.3 340.0Z" fill="#424446"/><circle cx="133.8" cy="340.0" r="3.7" fill="#6c6e71"/>
<path d="M597.0 340.8L599.5 347.3L601.5 347.3L604.0 340.8Z" fill="#424446"/><circle cx="600.5" cy="340.8" r="3.7" fill="#6c6e71"/>
<path d="M150.4 351.1L152.9 357.6L154.9 357.6L157.4 351.1Z" fill="#424446"/><circle cx="153.9" cy="351.1" r="3.7" fill="#6c6e71"/>
<path d="M177.1 351.1L179.6 357.6L181.6 357.6L184.1 351.1Z" fill="#424446"/><circle cx="180.6" cy="351.1" r="3.7" fill="#6c6e71"/>
<path d="M203.8 351.1L206.3 357.6L208.3 357.6L210.8 351.1Z" fill="#424446"/><circle cx="207.3" cy="351.1" r="3.7" fill="#6c6e71"/>
<path d="M230.5 351.1L233.0 357.6L235.0 357.6L237.5 351.1Z" fill="#424446"/><circle cx="234.0" cy="351.1" r="3.7" fill="#6c6e71"/>
<path d="M257.2 351.1L259.7 357.6L261.7 357.6L264.2 351.1Z" fill="#424446"/><circle cx="260.7" cy="351.1" r="3.7" fill="#6c6e71"/>
<path d="M283.9 351.1L286.4 357.6L288.4 357.6L290.9 351.1Z" fill="#424446"/><circle cx="287.4" cy="351.1" r="3.7" fill="#6c6e71"/>
<path d="M310.6 351.1L313.1 357.6L315.1 357.6L317.6 351.1Z" fill="#424446"/><circle cx="314.1" cy="351.1" r="3.7" fill="#6c6e71"/>
<path d="M364.0 351.1L366.5 357.6L368.5 357.6L371.0 351.1Z" fill="#424446"/><circle cx="367.5" cy="351.1" r="3.7" fill="#6c6e71"/>
<path d="M390.7 351.1L393.2 357.6L395.2 357.6L397.7 351.1Z" fill="#424446"/><circle cx="394.2" cy="351.1" r="3.7" fill="#6c6e71"/>
<path d="M417.4 351.1L419.9 357.6L421.9 357.6L424.4 351.1Z" fill="#424446"/><circle cx="420.9" cy="351.1" r="3.7" fill="#6c6e71"/>
<path d="M444.1 351.1L446.6 357.6L448.6 357.6L451.1 351.1Z" fill="#424446"/><circle cx="447.6" cy="351.1" r="3.7" fill="#6c6e71"/>
<path d="M470.8 351.1L473.3 357.6L475.3 357.6L477.8 351.1Z" fill="#424446"/><circle cx="474.3" cy="351.1" r="3.7" fill="#6c6e71"/>
<path d="M497.5 351.1L500.0 357.6L502.0 357.6L504.5 351.1Z" fill="#424446"/><circle cx="501.0" cy="351.1" r="3.7" fill="#6c6e71"/>
<path d="M524.2 351.1L526.7 357.6L528.7 357.6L531.2 351.1Z" fill="#424446"/><circle cx="527.7" cy="351.1" r="3.7" fill="#6c6e71"/>
<path d="M550.9 351.1L553.4 357.6L555.4 357.6L557.9 351.1Z" fill="#424446"/><circle cx="554.4" cy="351.1" r="3.7" fill="#6c6e71"/>
<path d="M122.5 377.0L125.0 383.5L127.0 383.5L129.5 377.0Z" fill="#424446"/><circle cx="126.0" cy="377.0" r="3.7" fill="#6c6e71"/>
<path d="M270.8 377.6L273.3 384.1L275.3 384.1L277.8 377.6Z" fill="#424446"/><circle cx="274.3" cy="377.6" r="3.7" fill="#6c6e71"/>
<path d="M324.2 377.6L326.7 384.1L328.7 384.1L331.2 377.6Z" fill="#424446"/><circle cx="327.7" cy="377.6" r="3.7" fill="#6c6e71"/>
<path d="M150.4 377.8L152.9 384.3L154.9 384.3L157.4 377.8Z" fill="#424446"/><circle cx="153.9" cy="377.8" r="3.7" fill="#6c6e71"/>
<path d="M177.1 377.8L179.6 384.3L181.6 384.3L184.1 377.8Z" fill="#424446"/><circle cx="180.6" cy="377.8" r="3.7" fill="#6c6e71"/>
<path d="M203.8 377.8L206.3 384.3L208.3 384.3L210.8 377.8Z" fill="#424446"/><circle cx="207.3" cy="377.8" r="3.7" fill="#6c6e71"/>
<path d="M230.5 377.8L233.0 384.3L235.0 384.3L237.5 377.8Z" fill="#424446"/><circle cx="234.0" cy="377.8" r="3.7" fill="#6c6e71"/>
<path d="M257.2 377.8L259.7 384.3L261.7 384.3L264.2 377.8Z" fill="#424446"/><circle cx="260.7" cy="377.8" r="3.7" fill="#6c6e71"/>
<path d="M283.9 377.8L286.4 384.3L288.4 384.3L290.9 377.8Z" fill="#424446"/><circle cx="287.4" cy="377.8" r="3.7" fill="#6c6e71"/>
<path d="M310.6 377.8L313.1 384.3L315.1 384.3L317.6 377.8Z" fill="#424446"/><circle cx="314.1" cy="377.8" r="3.7" fill="#6c6e71"/>
<path d="M364.0 377.8L366.5 384.3L368.5 384.3L371.0 377.8Z" fill="#424446"/><circle cx="367.5" cy="377.8" r="3.7" fill="#6c6e71"/>
<path d="M390.7 377.8L393.2 384.3L395.2 384.3L397.7 377.8Z" fill="#424446"/><circle cx="394.2" cy="377.8" r="3.7" fill="#6c6e71"/>
<path d="M417.4 377.8L419.9 384.3L421.9 384.3L424.4 377.8Z" fill="#424446"/><circle cx="420.9" cy="377.8" r="3.7" fill="#6c6e71"/>
<path d="M444.1 377.8L446.6 384.3L448.6 384.3L451.1 377.8Z" fill="#424446"/><circle cx="447.6" cy="377.8" r="3.7" fill="#6c6e71"/>
<path d="M470.8 377.8L473.3 384.3L475.3 384.3L477.8 377.8Z" fill="#424446"/><circle cx="474.3" cy="377.8" r="3.7" fill="#6c6e71"/>
<path d="M497.5 377.8L500.0 384.3L502.0 384.3L504.5 377.8Z" fill="#424446"/><circle cx="501.0" cy="377.8" r="3.7" fill="#6c6e71"/>
<path d="M524.2 377.8L526.7 384.3L528.7 384.3L531.2 377.8Z" fill="#424446"/><circle cx="527.7" cy="377.8" r="3.7" fill="#6c6e71"/>
<path d="M550.9 377.8L553.4 384.3L555.4 384.3L557.9 377.8Z" fill="#424446"/><circle cx="554.4" cy="377.8" r="3.7" fill="#6c6e71"/>
<path d="M119.9 385.6L122.4 392.1L124.4 392.1L126.9 385.6Z" fill="#424446"/><circle cx="123.4" cy="385.6" r="3.7" fill="#6c6e71"/>
<path d="M131.7 385.6L134.2 392.1L136.2 392.1L138.7 385.6Z" fill="#424446"/><circle cx="135.2" cy="385.6" r="3.7" fill="#6c6e71"/>
<path d="M152.4 385.6L154.9 392.1L156.9 392.1L159.4 385.6Z" fill="#424446"/><circle cx="155.9" cy="385.6" r="3.7" fill="#6c6e71"/>
<path d="M174.8 385.6L177.3 392.1L179.3 392.1L181.8 385.6Z" fill="#424446"/><circle cx="178.3" cy="385.6" r="3.7" fill="#6c6e71"/>
<path d="M196.8 385.6L199.3 392.1L201.3 392.1L203.8 385.6Z" fill="#424446"/><circle cx="200.3" cy="385.6" r="3.7" fill="#6c6e71"/>
<path d="M218.9 385.6L221.4 392.1L223.4 392.1L225.9 385.6Z" fill="#424446"/><circle cx="222.4" cy="385.6" r="3.7" fill="#6c6e71"/>
<path d="M243.1 385.6L245.6 392.1L247.6 392.1L250.1 385.6Z" fill="#424446"/><circle cx="246.6" cy="385.6" r="3.7" fill="#6c6e71"/>
<path d="M265.1 385.6L267.6 392.1L269.6 392.1L272.1 385.6Z" fill="#424446"/><circle cx="268.6" cy="385.6" r="3.7" fill="#6c6e71"/>
<path d="M276.2 385.6L278.7 392.1L280.7 392.1L283.2 385.6Z" fill="#424446"/><circle cx="279.7" cy="385.6" r="3.7" fill="#6c6e71"/>
<path d="M286.5 385.6L289.0 392.1L291.0 392.1L293.5 385.6Z" fill="#424446"/><circle cx="290.0" cy="385.6" r="3.7" fill="#6c6e71"/>
<path d="M297.5 385.6L300.0 392.1L302.0 392.1L304.5 385.6Z" fill="#424446"/><circle cx="301.0" cy="385.6" r="3.7" fill="#6c6e71"/>
<path d="M307.9 385.6L310.4 392.1L312.4 392.1L314.9 385.6Z" fill="#424446"/><circle cx="311.4" cy="385.6" r="3.7" fill="#6c6e71"/>
<path d="M318.5 385.6L321.0 392.1L323.0 392.1L325.5 385.6Z" fill="#424446"/><circle cx="322.0" cy="385.6" r="3.7" fill="#6c6e71"/>
<path d="M330.3 391.4L332.8 397.9L334.8 397.9L337.3 391.4Z" fill="#424446"/><circle cx="333.8" cy="391.4" r="3.7" fill="#6c6e71"/>
<path d="M384.5 396.5L387.0 403.0L389.0 403.0L391.5 396.5Z" fill="#424446"/><circle cx="388.0" cy="396.5" r="3.7" fill="#6c6e71"/>
<path d="M405.9 396.5L408.4 403.0L410.4 403.0L412.9 396.5Z" fill="#424446"/><circle cx="409.4" cy="396.5" r="3.7" fill="#6c6e71"/>
<path d="M434.2 396.5L436.7 403.0L438.7 403.0L441.2 396.5Z" fill="#424446"/><circle cx="437.7" cy="396.5" r="3.7" fill="#6c6e71"/>
<path d="M454.5 396.5L457.0 403.0L459.0 403.0L461.5 396.5Z" fill="#424446"/><circle cx="458.0" cy="396.5" r="3.7" fill="#6c6e71"/>
<path d="M474.7 396.5L477.2 403.0L479.2 403.0L481.7 396.5Z" fill="#424446"/><circle cx="478.2" cy="396.5" r="3.7" fill="#6c6e71"/>
<path d="M506.0 396.5L508.5 403.0L510.5 403.0L513.0 396.5Z" fill="#424446"/><circle cx="509.5" cy="396.5" r="3.7" fill="#6c6e71"/>
<path d="M538.3 396.5L540.8 403.0L542.8 403.0L545.3 396.5Z" fill="#424446"/><circle cx="541.8" cy="396.5" r="3.7" fill="#6c6e71"/>
<path d="M567.7 396.5L570.2 403.0L572.2 403.0L574.7 396.5Z" fill="#424446"/><circle cx="571.2" cy="396.5" r="3.7" fill="#6c6e71"/>
<path d="M239.4 88.7L242.0 97.3L244.0 97.3L246.6 88.7Z" fill="#4a4c4e"/><circle cx="243.0" cy="88.7" r="3.8" fill="#6c6e71"/>
<path d="M269.3 92.4L271.9 101.0L273.9 101.0L276.5 92.4Z" fill="#4a4c4e"/><circle cx="272.9" cy="92.4" r="3.8" fill="#6c6e71"/>
<path d="M293.4 92.4L296.0 101.0L298.0 101.0L300.6 92.4Z" fill="#4a4c4e"/><circle cx="297.0" cy="92.4" r="3.8" fill="#6c6e71"/>
<path d="M316.6 92.4L319.2 101.0L321.2 101.0L323.8 92.4Z" fill="#4a4c4e"/><circle cx="320.2" cy="92.4" r="3.8" fill="#6c6e71"/>
<path d="M346.9 92.4L349.5 101.0L351.5 101.0L354.1 92.4Z" fill="#4a4c4e"/><circle cx="350.5" cy="92.4" r="3.8" fill="#6c6e71"/>
<path d="M373.0 92.4L375.6 101.0L377.6 101.0L380.2 92.4Z" fill="#4a4c4e"/><circle cx="376.6" cy="92.4" r="3.8" fill="#6c6e71"/>
<path d="M401.4 92.4L404.0 101.0L406.0 101.0L408.6 92.4Z" fill="#4a4c4e"/><circle cx="405.0" cy="92.4" r="3.8" fill="#6c6e71"/>
<path d="M436.5 92.4L439.1 101.0L441.1 101.0L443.7 92.4Z" fill="#4a4c4e"/><circle cx="440.1" cy="92.4" r="3.8" fill="#6c6e71"/>
<path d="M467.8 92.4L470.4 101.0L472.4 101.0L475.0 92.4Z" fill="#4a4c4e"/><circle cx="471.4" cy="92.4" r="3.8" fill="#6c6e71"/>
<path d="M489.4 87.6L492.0 96.2L494.0 96.2L496.6 87.6Z" fill="#4a4c4e"/><circle cx="493.0" cy="87.6" r="3.8" fill="#6c6e71"/>
<path d="M267.0 107.7L264.5 102.2L262.5 102.2L260.0 107.7Z" fill="#424446"/><circle cx="263.5" cy="107.7" r="3.7" fill="#6c6e71"/>
<path d="M289.3 107.7L286.8 102.2L284.8 102.2L282.3 107.7Z" fill="#424446"/><circle cx="285.8" cy="107.7" r="3.7" fill="#6c6e71"/>
<path d="M311.5 107.7L309.0 102.2L307.0 102.2L304.5 107.7Z" fill="#424446"/><circle cx="308.0" cy="107.7" r="3.7" fill="#6c6e71"/>
<path d="M336.3 107.7L333.8 102.2L331.8 102.2L329.3 107.7Z" fill="#424446"/><circle cx="332.8" cy="107.7" r="3.7" fill="#6c6e71"/>
<path d="M367.3 107.7L364.8 102.2L362.8 102.2L360.3 107.7Z" fill="#424446"/><circle cx="363.8" cy="107.7" r="3.7" fill="#6c6e71"/>
<path d="M389.8 107.7L387.3 102.2L385.3 102.2L382.8 107.7Z" fill="#424446"/><circle cx="386.3" cy="107.7" r="3.7" fill="#6c6e71"/>
<path d="M412.0 107.7L409.5 102.2L407.5 102.2L405.0 107.7Z" fill="#424446"/><circle cx="408.5" cy="107.7" r="3.7" fill="#6c6e71"/>
<path d="M433.9 107.7L431.4 102.2L429.4 102.2L426.9 107.7Z" fill="#424446"/><circle cx="430.4" cy="107.7" r="3.7" fill="#6c6e71"/>
<path d="M465.2 107.7L462.7 102.2L460.7 102.2L458.2 107.7Z" fill="#424446"/><circle cx="461.7" cy="107.7" r="3.7" fill="#6c6e71"/>
<path d="M487.4 107.7L484.9 102.2L482.9 102.2L480.4 107.7Z" fill="#424446"/><circle cx="483.9" cy="107.7" r="3.7" fill="#6c6e71"/>
<path d="M249.0 129.6L253.0 118.6L257.0 129.6Z" fill="#55575a"/><ellipse cx="253.0" cy="129.6" rx="4" ry="2.2" fill="#5f6163"/>
<path d="M269.5 129.6L273.5 118.6L277.5 129.6Z" fill="#55575a"/><ellipse cx="273.5" cy="129.6" rx="4" ry="2.2" fill="#5f6163"/>
<path d="M289.8 129.6L293.8 118.6L297.8 129.6Z" fill="#55575a"/><ellipse cx="293.8" cy="129.6" rx="4" ry="2.2" fill="#5f6163"/>
<path d="M372.0 129.6L376.0 118.6L380.0 129.6Z" fill="#55575a"/><ellipse cx="376.0" cy="129.6" rx="4" ry="2.2" fill="#5f6163"/>
<path d="M391.6 129.6L395.6 118.6L399.6 129.6Z" fill="#55575a"/><ellipse cx="395.6" cy="129.6" rx="4" ry="2.2" fill="#5f6163"/>
<path d="M412.5 129.6L416.5 118.6L420.5 129.6Z" fill="#55575a"/><ellipse cx="416.5" cy="129.6" rx="4" ry="2.2" fill="#5f6163"/>
<path d="M433.0 129.6L437.0 118.6L441.0 129.6Z" fill="#55575a"/><ellipse cx="437.0" cy="129.6" rx="4" ry="2.2" fill="#5f6163"/>
<path d="M453.5 129.6L457.5 118.6L461.5 129.6Z" fill="#55575a"/><ellipse cx="457.5" cy="129.6" rx="4" ry="2.2" fill="#5f6163"/>
<path d="M474.0 129.6L478.0 118.6L482.0 129.6Z" fill="#55575a"/><ellipse cx="478.0" cy="129.6" rx="4" ry="2.2" fill="#5f6163"/>
<path d="M319.1 126.2L316.6 120.2L314.6 120.2L312.1 126.2Z" fill="#424446"/><circle cx="315.6" cy="126.2" r="3.7" fill="#6c6e71"/>
<path d="M339.9 126.2L337.4 120.2L335.4 120.2L332.9 126.2Z" fill="#424446"/><circle cx="336.4" cy="126.2" r="3.7" fill="#6c6e71"/>
<path d="M360.4 126.2L357.9 120.2L355.9 120.2L353.4 126.2Z" fill="#424446"/><circle cx="356.9" cy="126.2" r="3.7" fill="#6c6e71"/>
<path d="M427.6 155.5L431.2 147.5L434.8 155.5Z" fill="#55575a"/><ellipse cx="431.2" cy="155.5" rx="3.6" ry="2.2" fill="#5f6163"/>
<path d="M355.9 159.0L349.3 164.4L350.1 166.2L358.5 165.2Z" fill="#3e4042"/><circle cx="357.2" cy="162.1" r="3.6" fill="#85878a"/>
<path d="M374.3 160.1L367.7 165.5L368.5 167.3L376.9 166.3Z" fill="#3e4042"/><circle cx="375.6" cy="163.2" r="3.6" fill="#85878a"/>
<path d="M346.2 172.9L339.6 178.3L340.4 180.1L348.8 179.1Z" fill="#3e4042"/><circle cx="347.5" cy="176.0" r="3.6" fill="#85878a"/>
<path d="M341.0 211.1L334.4 216.5L335.2 218.3L343.6 217.3Z" fill="#3e4042"/><circle cx="342.3" cy="214.2" r="3.6" fill="#85878a"/>
<path d="M342.0 233.1L335.4 238.5L336.2 240.3L344.6 239.3Z" fill="#3e4042"/><circle cx="343.3" cy="236.2" r="3.6" fill="#85878a"/>
<path d="M341.0 256.4L334.4 261.8L335.2 263.6L343.6 262.6Z" fill="#3e4042"/><circle cx="342.3" cy="259.5" r="3.6" fill="#85878a"/>
<path d="M338.5 292.9L331.9 298.3L332.7 300.1L341.1 299.1Z" fill="#3e4042"/><circle cx="339.8" cy="296.0" r="3.6" fill="#85878a"/>
<path d="M352.4 320.7L345.8 326.1L346.6 327.9L355.0 326.9Z" fill="#3e4042"/><circle cx="353.7" cy="323.8" r="3.6" fill="#85878a"/>
<path d="M339.2 340.2L332.6 345.6L333.4 347.4L341.8 346.4Z" fill="#3e4042"/><circle cx="340.5" cy="343.3" r="3.6" fill="#85878a"/>
<path d="M339.3 362.9L332.7 368.3L333.5 370.1L341.9 369.1Z" fill="#3e4042"/><circle cx="340.6" cy="366.0" r="3.6" fill="#85878a"/>
<path d="M339.9 373.5L333.3 378.9L334.1 380.7L342.5 379.7Z" fill="#3e4042"/><circle cx="341.2" cy="376.6" r="3.6" fill="#85878a"/>
<path d="M353.7 393.2L347.1 398.6L347.9 400.4L356.3 399.4Z" fill="#3e4042"/><circle cx="355.0" cy="396.3" r="3.6" fill="#85878a"/>
<path d="M119.3 198.1L129.0 201.8L130.2 200.2L123.3 192.3Z" fill="#525456"/><circle cx="121.3" cy="195.2" r="3.7" fill="#5e6062"/>
<path d="M119.3 219.3L129.0 223.0L130.2 221.4L123.3 213.5Z" fill="#525456"/><circle cx="121.3" cy="216.4" r="3.7" fill="#5e6062"/>
<path d="M119.3 239.9L129.0 243.6L130.2 242.0L123.3 234.1Z" fill="#525456"/><circle cx="121.3" cy="237.0" r="3.7" fill="#5e6062"/>
<path d="M119.3 260.9L129.0 264.6L130.2 263.0L123.3 255.1Z" fill="#525456"/><circle cx="121.3" cy="258.0" r="3.7" fill="#5e6062"/>
<path d="M119.3 283.9L129.0 287.6L130.2 286.0L123.3 278.1Z" fill="#525456"/><circle cx="121.3" cy="281.0" r="3.7" fill="#5e6062"/>
<path d="M119.3 305.9L129.0 309.6L130.2 308.0L123.3 300.1Z" fill="#525456"/><circle cx="121.3" cy="303.0" r="3.7" fill="#5e6062"/>
<path d="M119.3 326.9L129.0 330.6L130.2 329.0L123.3 321.1Z" fill="#525456"/><circle cx="121.3" cy="324.0" r="3.7" fill="#5e6062"/>
<path d="M119.3 349.4L129.0 353.1L130.2 351.5L123.3 343.6Z" fill="#525456"/><circle cx="121.3" cy="346.5" r="3.7" fill="#5e6062"/>
<path d="M119.3 362.9L129.0 366.6L130.2 365.0L123.3 357.1Z" fill="#525456"/><circle cx="121.3" cy="360.0" r="3.7" fill="#5e6062"/>
<path d="M610.5 192.3L604.8 198.9L605.8 200.5L614.1 198.1Z" fill="#4a4c4e"/><circle cx="612.3" cy="195.2" r="3.6" fill="#85878a"/>
<path d="M610.5 219.8L604.8 226.4L605.8 228.0L614.1 225.6Z" fill="#4a4c4e"/><circle cx="612.3" cy="222.7" r="3.6" fill="#85878a"/>
<path d="M610.5 240.3L604.8 246.9L605.8 248.5L614.1 246.1Z" fill="#4a4c4e"/><circle cx="612.3" cy="243.2" r="3.6" fill="#85878a"/>
<path d="M610.5 264.6L604.8 271.2L605.8 272.8L614.1 270.4Z" fill="#4a4c4e"/><circle cx="612.3" cy="267.5" r="3.6" fill="#85878a"/>
<path d="M610.5 289.1L604.8 295.7L605.8 297.3L614.1 294.9Z" fill="#4a4c4e"/><circle cx="612.3" cy="292.0" r="3.6" fill="#85878a"/>
<path d="M610.5 310.5L604.8 317.1L605.8 318.7L614.1 316.3Z" fill="#4a4c4e"/><circle cx="612.3" cy="313.4" r="3.6" fill="#85878a"/>
<path d="M610.5 338.1L604.8 344.7L605.8 346.3L614.1 343.9Z" fill="#4a4c4e"/><circle cx="612.3" cy="341.0" r="3.6" fill="#85878a"/>
<path d="M610.5 357.1L604.8 363.7L605.8 365.3L614.1 362.9Z" fill="#4a4c4e"/><circle cx="612.3" cy="360.0" r="3.6" fill="#85878a"/>
<path d="M593.4 394.9L604.6 391.0L604.4 389.0L592.6 388.1Z" fill="#505254"/><circle cx="593.0" cy="391.5" r="3.6" fill="#6c6e71"/>
<path d="M568.7 254.9L575.5 258.8L576.9 257.4L573.7 250.3Z" fill="#505254"/><circle cx="571.2" cy="252.6" r="3.6" fill="#5e6062"/>
<path d="M569.4 289.7L576.2 293.6L577.6 292.2L574.4 285.1Z" fill="#505254"/><circle cx="571.9" cy="287.4" r="3.6" fill="#5e6062"/>
<path d="M566.9 373.1L573.7 377.0L575.1 375.6L571.9 368.5Z" fill="#505254"/><circle cx="569.4" cy="370.8" r="3.6" fill="#5e6062"/>
<path d="M568.0 398.3L574.8 402.2L576.2 400.8L573.0 393.7Z" fill="#505254"/><circle cx="570.5" cy="396.0" r="3.6" fill="#5e6062"/>
<path d="M569.6 228.8L576.4 232.7L577.8 231.3L574.6 224.2Z" fill="#505254"/><circle cx="572.1" cy="226.5" r="3.6" fill="#5e6062"/>
</svg>
</div>
<div class="pn" style="left:684.2px;top:52.5px;width:18px;height:12.5px"></div>
<div class="pn" style="left:684.2px;top:67px;width:18px;height:390px"></div>
<div class="pn" style="left:684.2px;top:458.5px;width:18px;height:18px"></div>
<div class="pn" style="left:0;top:458.5px;width:682.5px;height:18px;border-radius:0 3px 3px 0;background:#19191b"></div>
<div class="abs" style="left:0;top:477px;width:841px;height:12px;background:#1a1b1d"></div>
<div class="pn" style="left:704px;top:19.5px;width:136px;height:178px;background:#18191b"><div class="abs" style="left:0;top:0;width:100%;height:41.5px;background:#1d1e20;border-radius:3px 3px 0 0"></div></div>
<div class="pn" style="left:704px;top:200px;width:136px;height:197.5px;background:#18191b"><div class="abs" style="left:0;top:0;width:100%;height:41px;background:#1d1e20;border-radius:3px 3px 0 0"></div></div>
<div class="pn" style="left:704px;top:399.5px;width:136px;height:76.5px;background:#1d1e20"></div>
<div class="abs" style="left:841px;top:0;width:29px;height:489px;background:#101011"></div>
<div class="abs" style="left:841px;top:247px;width:29px;height:21px;background:#3a3b3d"></div>
<div class="abs" style="left:868.5px;top:247px;width:1.5px;height:21px;background:#76b9ed"></div>
<div class="t tl c" style="left:64px">Добавить машину</div>
<div class="t tl c" style="left:105px">История</div>
<div class="t tl c" style="left:133.5px">Открыть</div>
<div class="t tl c" style="left:169.5px">Экспорт</div>
<div class="t tl c" style="left:200px">Сохранить</div>
<div class="t tl c" style="left:243.5px">Копировать</div>
<div class="t tl c" style="left:283.5px">Сплит-модель</div>
<div class="t tl c" style="left:344px">Автоматическая ориентация</div>
<div class="t tl c" style="left:424px">Автоматическое размещение</div>
<div class="t tl c" style="left:482.5px">Добавить тэг</div>
<div class="t tl c" style="left:528px">Булеаноперация</div>
<div class="t tl c" style="left:569px">Вырезать</div>
<div class="t tl c" style="left:598px">Пустота</div>
<div class="t tl c" style="left:641px">Проделать отверстие</div>
<div class="abs" style="left:152px;top:25px;width:1px;height:20px;background:#131415"></div>
<div class="abs" style="left:221.500px;top:25px;width:1px;height:20px;background:#131415"></div>
<div class="abs" style="left:35px;top:60.5px;width:270.5px;height:19px;background:#1b1c1e;border-radius:3px;border:0.5px solid #2a2b2d"></div>
<div class="abs" style="left:40px;top:62px;width:35.5px;height:15.6px;border-top:1px solid #0d4374;border-bottom:1px solid #0d4374"></div>
<div class="abs" style="left:40px;top:62px;width:2.3px;height:15.6px;background:#1489e6;border-radius:1px"></div>
<div class="abs" style="left:73.2px;top:62px;width:2.3px;height:15.6px;background:#1489e6;border-radius:1px"></div>
<div class="wf" style="left:45px">Масштаб</div>
<div class="wf" style="left:78px">Ориент</div>
<div class="wf" style="left:110px">Поддержка</div>
<div class="wf" style="left:143px">Макет</div>
<div class="wf" style="left:175.6px">Экспорт...</div>
<div class="wf" style="left:208px">Сохранит...</div>
<div class="wf" style="left:240.7px">Сохранит...</div>
<div class="wa" style="left:106.2px"></div>
<div class="wa" style="left:138.7px"></div>
<div class="wa" style="left:171.3px"></div>
<div class="wa" style="left:203.9px"></div>
<div class="wa" style="left:236.5px"></div>
<div class="abs" style="left:290.5px;top:64.5px;width:11px;height:11px;background:#0a7fd9;border-radius:1.5px"></div>
<div class="abs" style="left:294px;top:67px;width:0;height:0;border-left:5px solid #fff;border-top:3px solid transparent;border-bottom:3px solid transparent"></div>
<div class="abs" style="left:512.5px;top:62px;width:49px;height:16px;background:#1b1c1e;border-radius:2px"></div>
<div class="abs" style="left:528.5px;top:62px;width:16.5px;height:16px;background:#202123"></div>
<div class="abs" style="left:533px;top:76.7px;width:8px;height:1.3px;background:#1479c8"></div>
<div class="abs" style="left:570.5px;top:62px;width:32.5px;height:16px;background:#1b1c1e;border-radius:2px"></div>
<div class="abs" style="left:586.5px;top:62px;width:16.5px;height:16px;background:#202123;border-radius:0 2px 2px 0"></div>
<div class="abs" style="left:591px;top:76.7px;width:8px;height:1.3px;background:#1479c8"></div>
<div class="abs" style="left:630px;top:83px;width:22.5px;height:21.7px;background:#77797b"></div>
<div class="abs" style="left:630px;top:83px;width:22.5px;height:21.7px;line-height:21.7px;font-size:5.4px;font-weight:bold;color:#fff;transform:rotate(180deg);letter-spacing:-0.3px;text-align:center;white-space:nowrap">BOTTOM</div>
<div class="t info" style="left:43.5px;top:389.7px;--sx:0.87">Проект:</div>
<div class="t info r" style="left:170.5px;top:389.7px">Чехол_00</div>
<div class="t info" style="left:43.5px;top:400.6px;--sx:0.84">Смола:</div>
<div class="t info r" style="left:170.5px;top:400.6px">water wash</div>
<div class="t info" style="left:43.5px;top:411.4px;--sx:0.88">Толщина слоя:</div>
<div class="t info r" style="left:170.5px;top:411.4px">0.03 mm</div>
<div class="t info" style="left:43.5px;top:422.3px;--sx:0.876">Номер слоя:</div>
<div class="t info r" style="left:170.5px;top:422.3px">1222</div>
<div class="t info" style="left:43.5px;top:433.2px;--sx:0.89">Время контакта:</div>
<div class="t info r" style="left:170.5px;top:433.2px">2.25s</div>
<div class="t info" style="left:43.5px;top:444.1px;--sx:0.93">Ориентировочное время печати:</div>
<div class="t info r" style="left:170.5px;top:444.1px">2h31m42s</div>
<div class="abs" style="left:583px;top:405px;width:99px;height:26px;background:#1c1d1f;border-radius:3px;border:0.6px solid #2b2c2e"></div>
<div class="abs" style="left:585.5px;top:409px;width:3.5px;height:18px;background:#1489e6;border-radius:1.5px"></div>
<div class="t" style="left:596px;top:415.2px;font-size:6.6px;color:#1a78c8;letter-spacing:-0.1px;--sx:.955">Перекрытие без модели</div>
<div class="abs" style="left:583px;top:433px;width:99px;height:24.5px;background:#1c1d1f;border-radius:3px;border:0.6px solid #2b2c2e"></div>
<div class="abs" style="left:585.5px;top:437px;width:3.5px;height:18px;background:#1489e6;border-radius:1.5px"></div>
<div class="t" style="left:596px;top:443.2px;font-size:6.6px;color:#1a78c8;letter-spacing:-0.1px;--sx:.955">Нет закрытой полости</div>
<div class="abs" style="left:6px;top:462px;width:110px;height:12.5px;border:1px solid #1489e6;border-radius:2px;background:#1d1e20"></div>
<div class="t" style="left:10.5px;top:464.5px;font-size:7.4px;color:#e8e8e8;letter-spacing:-0.1px;--sx:.87">AnyCubic Photon Mono M5s Pro</div>
<div class="t" style="left:131px;top:462.5px;font-size:11px;color:#e0e0e0">+</div>
<div class="abs" style="left:636.5px;top:461px;width:1px;height:13px;background:#2a2b2d"></div>
<div class="t st" style="left:4.5px;--sx:.957">0 цель выбрана</div>
<div class="t st" style="left:411.3px;--sx:.94">Количество целевых вершин:&nbsp; 0</div>
<div class="t st" style="left:496px;--sx:.96">Количество целевых треугольников:&nbsp; 0</div>
<div class="t st" style="left:597.7px;--sx:1">Целевой объем/объем поддержки: 0.00/0.00 ml</div>
<div class="t st" style="left:724.8px;--sx:.98">Целевая цена/цена поддержки:&nbsp; 0.00/0.00 руб</div>
<div class="abs" style="left:692px;top:394px;width:3px;height:26px;background:#0c0c0d;border-radius:1.5px"></div>
<div class="abs" style="left:692px;top:135px;width:3px;height:255px;background:#0c80dc"></div>
<div class="abs" style="left:688.5px;top:131.5px;width:9.2px;height:7px;background:#1489e6;border-radius:1px"></div>
<div class="abs" style="left:691.3px;top:134.5px;width:3.6px;height:1px;background:#fff"></div>
<div class="abs" style="left:688.5px;top:387.3px;width:9.2px;height:7px;background:#1489e6;border-radius:1px"></div>
<div class="abs" style="left:691.3px;top:390.3px;width:3.6px;height:1px;background:#fff"></div>
<div class="t c" style="left:693.5px;top:77.5px;font-size:5.5px;color:#c01818">X</div>
<div class="t c" style="left:693.5px;top:95px;font-size:5.5px;color:#1a8a1a">Y</div>
<div class="t" style="left:674px;top:200.5px;font-size:8.5px;color:#8a8a8a;--sx:.9">¾</div>
<div class="t" style="left:674px;top:270.5px;font-size:8.5px;color:#8a8a8a;--sx:.9">½</div>
<div class="t" style="left:674px;top:341.5px;font-size:8.5px;color:#8a8a8a;--sx:.9">¼</div>
<div class="t" style="left:725px;top:30.7px;font-size:7.2px;font-weight:bold;color:#e6e6e6;letter-spacing:-0.15px;--sx:.855">Список файлов(2)</div>
<div class="abs" style="left:708px;top:77.5px;width:127.5px;height:16px;background:#06579a;border-radius:2px"></div>
<div class="t li" style="left:738.5px;top:66.5px;color:#8a8a8a">Чехол_00.stl</div>
<div class="t li" style="left:738.5px;top:82.7px;color:#e6e6e6">Чехол.STL</div>
<div class="t" style="left:725px;top:210.5px;font-size:7.2px;font-weight:bold;color:#e6e6e6;letter-spacing:-0.15px;--sx:.853">Конфигурация</div>
<div class="abs" style="left:708px;top:291px;width:127.5px;height:15.7px;background:#06579a;border-radius:2px"></div>
<div class="t li" style="left:715px;top:247.3px;color:#a2a2a2">Standard Resin_Normal</div>
<div class="dots" style="left:825.8px;top:246.3px"></div>
<div class="t li" style="left:715px;top:263.5px;color:#a2a2a2">Standard Resin_Fast</div>
<div class="dots" style="left:825.8px;top:262.5px"></div>
<div class="t li" style="left:715px;top:279.7px;color:#a2a2a2">Fast Resin_Fast</div>
<div class="dots" style="left:825.8px;top:278.7px"></div>
<div class="t li" style="left:715px;top:296px;color:#f0f0f0">Kingroon water wash</div>
<div class="dots" style="left:825.8px;top:295px"></div>
<div class="t" style="left:724px;top:404.3px;font-size:7.2px;font-weight:bold;color:#e6e6e6;letter-spacing:-0.15px;--sx:.825">Разрез</div>
<div class="abs" style="left:711.3px;top:417.5px;width:59px;height:17.7px;background:#2b2c2e;border-radius:2px"></div>
<div class="abs" style="left:774px;top:417.5px;width:59px;height:17.7px;background:#272829;border-radius:2px"></div>
<div class="t" style="left:730.5px;top:423px;font-size:7px;color:#b4b4b4;--sx:.878">Настройки</div>
<div class="t" style="left:799.5px;top:423px;font-size:7px;color:#4e4f51;--sx:.84">Режим</div>
<div class="abs" style="left:711.3px;top:440.3px;width:121.7px;height:28.7px;background:#0a7fd9;border-radius:2px"></div>
<div class="t c" style="left:772px;top:450.5px;font-size:8px;color:#f4f4f4;letter-spacing:-0.1px;--sx:.88">Один параметр фрагмента</div>
<div class="t c" style="left:855.5px;top:432.5px;font-size:5.6px;color:#e8e8e8;font-weight:bold;--sx:.8">РУС</div>
<div class="t c" style="left:855.5px;top:449.5px;font-size:5.8px;color:#e8e8e8;font-weight:bold;letter-spacing:-0.2px;--sx:.887">11:38:21</div>
<div class="t c" style="left:855.5px;top:457.5px;font-size:5.8px;color:#e8e8e8;font-weight:bold;letter-spacing:-0.2px">13.06.2025</div>
<svg width="870" height="489" viewBox="0 0 870 489" style="left:0;top:0">
<rect x="10" y="4.5" width="9.5" height="9.5" rx="1" fill="#0b4f93"/><path d="M14.75 5.200Q15.800 8.200 18.800 9.250Q15.800 10.300 14.75 13.300Q13.700 10.300 10.700 9.250Q13.700 8.200 14.75 5.200Z" fill="#fff" stroke="#fff" stroke-width="1.200" stroke-linejoin="round"/>
<path d="M86.5 8h4.3a2.3 2.3 0 0 1 0 4.6h-3" fill="none" stroke="#dcdcdc" stroke-width="1"/><path d="M88.3 5.8 L86 8 L88.3 10.2" fill="none" stroke="#dcdcdc" stroke-width="1"/>
<path d="M116.5 8h-4.3a2.3 2.3 0 0 0 0 4.6h3" fill="none" stroke="#8a8a8a" stroke-width="1"/><path d="M114.7 5.8 L117 8 L114.7 10.2" fill="none" stroke="#8a8a8a" stroke-width="1"/>
<circle cx="714" cy="9" r="4" fill="none" stroke="#dcdcdc" stroke-width="1"/><rect x="712" y="7" width="4" height="3.5" fill="#dcdcdc"/>
<rect x="729" y="5.5" width="8.5" height="6" rx="1" fill="none" stroke="#dcdcdc" stroke-width="1"/><path d="M730.5 11.5v2l2-2" fill="#dcdcdc"/><path d="M731 8.5h4.5" stroke="#dcdcdc" stroke-width="0.8" stroke-dasharray="1 0.7"/>
<path d="M749 9.5l3-4 4 2.5-1 4-3 .5-.8 1.5-.7-2z" fill="none" stroke="#dcdcdc" stroke-width="1"/>
<path d="M784 9.2h6" stroke="#9a9a9a" stroke-width="1"/>
<rect x="806" y="7.5" width="4.5" height="4.5" fill="none" stroke="#9a9a9a" stroke-width="0.9"/><path d="M807.5 7.5v-1.3h4.5v4.5h-1.5" fill="none" stroke="#9a9a9a" stroke-width="0.9"/>
<path d="M827.5 6.3l5.6 5.6M833.1 6.3l-5.6 5.6" stroke="#dcdcdc" stroke-width="1"/>
<path d="M13 31.3h8.5M13 35h8.5M13 38.7h8.5" stroke="#dcdcdc" stroke-width="1.3"/>
<rect x="60.2" y="26.2" width="7.6" height="4.6" rx="0.6" fill="#dcdcdc"/><path d="M62 28.2h4.200" stroke="#1a1b1d" stroke-width="0.9"/><path d="M63 27.300l1.200-.8 1.200.8" fill="#1a1b1d"/>
<rect x="60.2" y="32" width="3" height="3.2" fill="#dcdcdc"/><rect x="64.400" y="31.900" width="3.800" height="3.400" fill="none" stroke="#dcdcdc" stroke-width="0.8"/><path d="M65.500 33.600h1.600M66.300 32.800v1.600" stroke="#dcdcdc" stroke-width="0.6"/>
<path d="M101.400 27.300h2.300v-1h4v1h2.400v7.900h-8.700z" fill="#dcdcdc"/><circle cx="105.800" cy="31" r="2.500" fill="#1a1b1d"/><circle cx="105.800" cy="31" r="1.500" fill="none" stroke="#dcdcdc" stroke-width="0.7"/><path d="M105.800 30v1h.9" stroke="#dcdcdc" stroke-width="0.5" fill="none"/>
<path d="M129 26.400h4l1 1.100h4.100v1.300h-9.100z" fill="#dcdcdc"/><rect x="129" y="29.600" width="9.100" height="5.600" fill="#dcdcdc"/>
<path d="M165.400 26h4l2 2v7.300h-6z" fill="#dcdcdc"/><path d="M169.400 26v2h2" fill="none" stroke="#1a1b1d" stroke-width="0.6"/><rect x="169" y="30.300" width="5.400" height="4.800" fill="#1a1b1d" stroke="#dcdcdc" stroke-width="0.8"/><path d="M170.600 31.700l1.600 1-1.600 1" fill="none" stroke="#dcdcdc" stroke-width="0.7"/>
<circle cx="169.600" cy="37.700" r="0.600" fill="#dcdcdc"/>
<path d="M196.700 26.300h7.400l1.700 1.700v7.300h-9.100z" fill="#dcdcdc"/><rect x="198.700" y="27" width="4.600" height="2.600" fill="#1a1b1d"/><rect x="198.500" y="31.500" width="5.500" height="3.800" fill="#1a1b1d"/><path d="M199.500 32.800h3.500M199.500 34.200h3.500" stroke="#dcdcdc" stroke-width="0.600"/>
<rect x="239.200" y="25.800" width="6" height="6" rx="0.600" fill="none" stroke="#dcdcdc" stroke-width="0.900"/><rect x="241.600" y="28.300" width="7" height="7" rx="0.600" fill="#dcdcdc"/><path d="M243.600 31.800h3M245.100 30.300v3" stroke="#1a1b1d" stroke-width="0.900"/>
<path d="M280.300 25.800h7.600v3.400l-1.900-1.500-1.900 1.500-1.900-1.500-1.900 1.500z" fill="#dcdcdc"/><path d="M280.300 35.300h7.600v-4.700l-1.900-1.500-1.900 1.500-1.900-1.500-1.900 1.500z" fill="#dcdcdc"/>
<circle cx="344.300" cy="30.400" r="4.400" fill="none" stroke="#dcdcdc" stroke-width="1"/><circle cx="344.300" cy="30.400" r="2.300" fill="none" stroke="#dcdcdc" stroke-width="0.900"/><path d="M344.300 30.400l2 3.500" stroke="#dcdcdc" stroke-width="0.800"/>
<rect x="419.700" y="26" width="8.300" height="8.300" rx="0.800" fill="none" stroke="#dcdcdc" stroke-width="1"/><rect x="421.500" y="27.800" width="2" height="4.700" fill="#dcdcdc"/><rect x="424.500" y="27.800" width="1.800" height="1.800" fill="#dcdcdc"/><rect x="424.500" y="30.700" width="1.800" height="1.800" fill="#dcdcdc"/>
<path d="M478.500 26h4.300l4.200 3.700-4.200 3.700h-1.300" fill="#dcdcdc"/><path d="M478.500 26v4.500h4.500v-4.500z" fill="#dcdcdc"/><circle cx="480" cy="32.800" r="2.300" fill="#1a1b1d" stroke="#dcdcdc" stroke-width="0.800"/><path d="M479 32.800h2M480 31.800v2" stroke="#dcdcdc" stroke-width="0.600"/>
<rect x="524.200" y="25.800" width="6" height="6" fill="#dcdcdc"/><circle cx="530.300" cy="31.700" r="3.200" fill="#1a1b1d" stroke="#dcdcdc" stroke-width="0.900"/>
<rect x="565.400" y="26" width="8.300" height="9" fill="#dcdcdc"/><path d="M565.400 30.800q2-2.200 4.100-.500t4.200-.700v2.300q-2.200 1.500-4.200.300t-4.100.900z" fill="#1a1b1d"/>
<path d="M594.300 28v5.700a4.150 1.800 0 0 0 8.300 0v-5.700z" fill="#dcdcdc"/><ellipse cx="598.450" cy="28" rx="4.150" ry="1.900" fill="#dcdcdc"/><ellipse cx="598.450" cy="28" rx="2.700" ry="1" fill="#1a1b1d"/>
<path d="M641.300 25.800l4.100 2v5.500l-4.100 2.200-4.100-2.200v-5.500z" fill="#dcdcdc"/><path d="M637.200 27.800l4.100 2 4.100-2M641.300 29.800v5.700" fill="none" stroke="#1a1b1d" stroke-width="0.500"/><circle cx="639.300" cy="31.800" r="1.400" fill="#1a1b1d"/>
<rect x="9" y="61.3" width="16.5" height="16.5" rx="1.5" fill="#1a8fe8"/>
<g transform="rotate(-45 17.600 69.200)"><path d="M13.800 69.200c0-1.200 1.600-2.300 4-2.300 2.200 0 4 1 5 2.300-1 1.300-2.800 2.300-5 2.300-2.400 0-4-1.100-4-2.300z" fill="#fff"/><path d="M15.300 67.300l-2.300-1.300.8 2.300zM15.300 71.100l-2.300 1.300.8-2.300z" fill="#fff"/><circle cx="19.400" cy="69.200" r="0.900" fill="#1a8fe8"/></g>
<circle cx="13.300" cy="73.600" r="0.900" fill="#fff"/>
<rect x="9" y="96" width="16.5" height="16.500" rx="1.5" fill="#1a8fe8"/>
<rect x="12.500" y="99.500" width="7.500" height="7.500" fill="none" stroke="#e8f2fb" stroke-width="0.9" stroke-dasharray="1.6 1"/><path d="M17.300 104.300l5.200 2.200-2.200.8-.8 2.200z" fill="#fff"/><path d="M24.300 109.300v2h-2z" fill="#e8f2fb"/>
<path d="M17 126.500v6.500M13.800 129.700h6.500" stroke="#dcdcdc" stroke-width="0.9"/><path d="M15.300 127l1.700-2.200 1.700 2.200zM15.300 132.400l1.700 2.200 1.700-2.200zM14.300 128l-2.200 1.700 2.200 1.700zM19.700 128l2.200 1.700-2.200 1.700z" fill="#dcdcdc"/>
<path d="M20.500 157.500a4 4 0 1 1 -1-5.300" fill="none" stroke="#dcdcdc" stroke-width="1"/><path d="M18.500 157.300l2.300.700.500-2.500" fill="none" stroke="#dcdcdc" stroke-width="0.9"/>
<rect x="13.300" y="180" width="4.500" height="4.500" fill="none" stroke="#dcdcdc" stroke-width="0.9"/><path d="M13.300 178v-2h8v8h-1.500" fill="none" stroke="#dcdcdc" stroke-width="0.9" stroke-dasharray="1.600 1"/>
<rect x="13" y="202.500" width="2.600" height="6.500" fill="none" stroke="#dcdcdc" stroke-width="0.9"/><path d="M17.200 201v9.500" stroke="#dcdcdc" stroke-width="0.9"/><rect x="18.800" y="202.500" width="2.600" height="6.500" fill="none" stroke="#dcdcdc" stroke-width="0.9" stroke-dasharray="1 0.800"/>
<path d="M9 373.500h16" stroke="#252628" stroke-width="1"/>
<path d="M15 387.200h6.500v6.300h-3" fill="none" stroke="#dcdcdc" stroke-width="0.900"/><path d="M15.200 388.800l2.300 1.200v2.700l-2.300 1.300-2.300-1.300v-2.700z" fill="#dcdcdc"/>
<path d="M14.300 418.500l1.200-4.300 4.500-1.700 1.300 3.500-2 2.500" fill="none" stroke="#dcdcdc" stroke-width="0.900" stroke-linejoin="round"/><path d="M12.800 420.500h9" stroke="#dcdcdc" stroke-width="1" stroke-dasharray="2.200 0.700"/>
<ellipse cx="17.300" cy="441.500" rx="4.600" ry="1.900" fill="none" stroke="#dcdcdc" stroke-width="0.800"/><ellipse cx="17.300" cy="441.500" rx="1.900" ry="4.600" fill="none" stroke="#dcdcdc" stroke-width="0.800"/>
<circle cx="282.500" cy="70" r="3.300" fill="none" stroke="#dcdcdc" stroke-width="0.900"/><circle cx="282.500" cy="70" r="1.300" fill="none" stroke="#dcdcdc" stroke-width="0.800"/>
<path d="M518.3 66.300l2.600 1.800v5.300" fill="none" stroke="#ececec" stroke-width="1.900" stroke-linejoin="round"/><path d="M517.3 73.900h6.600" stroke="#ececec" stroke-width="1.300"/>
<path d="M534.5 66.300l2.600 1.800v5.300" fill="none" stroke="#ececec" stroke-width="1.900" stroke-linejoin="round"/><path d="M533.5 73.900h6.600" stroke="#ececec" stroke-width="1.300"/>
<path d="M550.8 66.300l2.600 1.800v5.300" fill="none" stroke="#5a5b5d" stroke-width="1.900" stroke-linejoin="round"/><path d="M549.8 73.900h6.600" stroke="#5a5b5d" stroke-width="1.300"/>
<circle cx="578.500" cy="70" r="3.700" fill="#8a8b8d"/><circle cx="577.600" cy="69.200" r="2" fill="#98999b"/>
<circle cx="595" cy="70" r="3.300" fill="none" stroke="#1a86dc" stroke-width="1.300"/><path d="M592 71.500a3.300 3.300 0 0 0 4.500 1.600" fill="none" stroke="#1a86dc" stroke-width="2"/>
<path d="M613 67.500l2.500-2.300h6.500l-2.500 2.300z" fill="#c4c4c4"/><rect x="613" y="67.500" width="6.500" height="7" fill="#9c9c9c"/><path d="M619.500 67.500l2.500-2.300v7l-2.500 2.300z" fill="#767676"/>
<path d="M645.600 73.800C646.300 69.500 644 66.600 641.500 66.800C640.300 66.900 639.300 67.800 638.800 69" fill="none" stroke="#dcdcdc" stroke-width="1.200"/><path d="M636.800 68L641.300 69.300L638 72.600Z" fill="#dcdcdc"/>
<path d="M660.300 70.600l5.200-4.800 5.200 4.800h-1.400v3.700h-7.600v-3.700z" fill="#dcdcdc"/><circle cx="665.500" cy="71" r="1.400" fill="#232426"/>
<path d="M664.500 90.600C668 90.300 670.300 92 670 94C669.700 96 668 96.700 665.500 96.600" fill="none" stroke="#dcdcdc" stroke-width="1.200"/><path d="M666 94L662 96.600L666 99Z" fill="#dcdcdc"/>
<path d="M639.500 117.500C639.800 120.500 642 122 644 121.300C645.300 120.800 645.900 119 645.700 117" fill="none" stroke="#dcdcdc" stroke-width="1.200"/><path d="M637 118.600L638.300 114.600L641.800 116.800Z" fill="#dcdcdc"/>
<path d="M617 90.800C615 92 614.600 95 617.500 96.300" fill="none" stroke="#dcdcdc" stroke-width="1.100"/><path d="M617.300 93.800L621 97L616.800 98.600Z" fill="#dcdcdc"/>
<path d="M690.300 56v5.500M693 56l2.300 2.700-2.300 2.700" fill="none" stroke="#dcdcdc" stroke-width="0.900"/>
<path d="M690.500 119.500l2.700 1.700 2.700-1.700" fill="none" stroke="#dcdcdc" stroke-width="0.800"/>
<path d="M690.500 431.500l2.700-1.700 2.700 1.700" fill="none" stroke="#dcdcdc" stroke-width="0.800"/>
<path d="M691.500 442.500v6.500M690 447.500l1.500 1.700 1.500-1.700M693.500 443h3.500M695.200 443v6M694 445h2.500" fill="none" stroke="#dcdcdc" stroke-width="0.800"/>
<path d="M687.300 82.500l2 2M687.300 100l2 2" stroke="#dcdcdc" stroke-width="0.800"/>
<rect x="689.500" y="465" width="7" height="5" rx="0.800" fill="none" stroke="#9a9a9a" stroke-width="0.800"/><path d="M691.500 468.300h3" stroke="#9a9a9a" stroke-width="0.700"/>
<path d="M670.700 415.5l5 5M675.700 415.5l-5 5" stroke="#dcdcdc" stroke-width="1"/>
<path d="M670.700 443.2l5 5M675.700 443.2l-5 5" stroke="#dcdcdc" stroke-width="1"/>
<rect x="643.500" y="464.500" width="6.500" height="6.500" rx="0.800" fill="none" stroke="#1a86dc" stroke-width="1"/><rect x="645.300" y="466.300" width="3" height="3" fill="#1a86dc"/>
<rect x="658.500" y="464" width="5" height="5" rx="0.800" fill="none" stroke="#1a86dc" stroke-width="0.900"/><rect x="660.500" y="466" width="5" height="5" rx="0.800" fill="none" stroke="#1a86dc" stroke-width="0.900"/>
<rect x="674" y="466" width="2" height="3.500" fill="#7a7a7a"/>
<circle cx="109.800" cy="465.700" r="0.600" fill="#ccc"/><circle cx="109.800" cy="468" r="0.600" fill="#ccc"/><circle cx="109.800" cy="470.300" r="0.600" fill="#ccc"/>
<path d="M712.500 31.500h1M712.500 34.300h1M712.500 37h1" stroke="#dcdcdc" stroke-width="1.100"/><path d="M715 31.500h4.500M715 34.300h4.500M715 37h4.500" stroke="#dcdcdc" stroke-width="1.100"/>
<rect x="712.400" y="48.700" width="7.300" height="7" rx="1.500" fill="none" stroke="#b4b4b4" stroke-width="0.800"/>
<rect x="726.500" y="48.500" width="4" height="4" rx="0.600" fill="none" stroke="#dcdcdc" stroke-width="0.800"/><rect x="729" y="51.500" width="4.500" height="4" rx="0.600" fill="none" stroke="#dcdcdc" stroke-width="0.800"/>
<circle cx="780.500" cy="52" r="3.300" fill="none" stroke="#9a9a9a" stroke-width="0.800"/><circle cx="779.500" cy="50.800" r="0.600" fill="#9a9a9a"/><circle cx="781.800" cy="51" r="0.600" fill="#9a9a9a"/>
<path d="M796 48.500v7M792.800 50.300l6.400 3.500M799.200 50.300l-6.400 3.500" stroke="#9a9a9a" stroke-width="0.800"/>
<rect x="808" y="48.800" width="6.500" height="6.500" rx="1" fill="none" stroke="#9a9a9a" stroke-width="0.800"/><path d="M811.200 50.500v3M809.700 52h3" stroke="#9a9a9a" stroke-width="0.800"/>
<path d="M824.500 50.500h5.500v5h-5.500zM823.800 50.500h7M826 49.300h2.500M826.400 52v2.500M828.100 52v2.500" fill="none" stroke="#9a9a9a" stroke-width="0.800"/>
<rect x="712.400" y="65.800" width="7.300" height="7" rx="1.500" fill="none" stroke="#b4b4b4" stroke-width="0.800"/>
<rect x="712.400" y="82.200" width="7.300" height="7" rx="1.500" fill="#1a86dc"/><path d="M714.200 85.700l1.400 1.400 2.400-2.800" fill="none" stroke="#fff" stroke-width="0.900"/>
<path d="M729.500 65.4l3.100 1.800v3.600l-3.100 1.800-3.100-1.800v-3.600z" fill="#1a86dc"/>
<path d="M729.500 81.9l3.100 1.800v3.600l-3.100 1.800-3.100-1.800v-3.600z" fill="#1a86dc"/>
<path d="M825 69.300a2.500 1.500 0 0 0 4.500 0" fill="none" stroke="#b0b0b0" stroke-width="0.800"/>
<path d="M824.300 85.500q3-3.300 6 0q-3 3.300-6 0z" fill="#fff"/><circle cx="827.300" cy="85.500" r="1" fill="#06579a"/>
<path d="M712.500 211.500a2 2 0 0 1 3.500-1l2.500 3 1.500 1.800-1.200 1-3-3a2 2 0 0 1 -3.300-1.800z" fill="none" stroke="#dcdcdc" stroke-width="0.900"/>
<path d="M714.8 234h-1a2.300 2.300 0 0 1 0-4.500a3 3 0 0 1 6 0a2.300 2.300 0 0 1 0 4.500h-1" fill="none" stroke="#8a8a8a" stroke-width="0.700"/><path d="M716.8 236v-4.500M715.5 233l1.300-1.500 1.300 1.500" fill="none" stroke="#8a8a8a" stroke-width="0.700"/>
<path d="M743 234h-1a2.300 2.300 0 0 1 0-4.500a3 3 0 0 1 6 0a2.300 2.300 0 0 1 0 4.500h-1" fill="none" stroke="#8a8a8a" stroke-width="0.700"/><path d="M745 236v-4.500M743.7 233l1.300-1.500 1.300 1.500" fill="none" stroke="#8a8a8a" stroke-width="0.700"/>
<rect x="770" y="228.300" width="6.500" height="6.500" rx="1" fill="none" stroke="#8a8a8a" stroke-width="0.700"/><path d="M773.200 230v3M771.700 231.500h3" stroke="#8a8a8a" stroke-width="0.700"/>
<path d="M799 228.300h3.500l2 2v4.700h-5.500z" fill="none" stroke="#8a8a8a" stroke-width="0.700"/><path d="M801.700 230.800v2.600M800.400 232.100h2.600" stroke="#8a8a8a" stroke-width="0.700"/>
<path d="M826.500 228.300h4l2 2v2.500l-2.500 2.200h-3.500z" fill="none" stroke="#8a8a8a" stroke-width="0.700"/><path d="M829 233l3-3" stroke="#8a8a8a" stroke-width="0.700"/>
<path d="M712.500 405l3.500-1.500 3.500 1.500-3.500 1.500zM712.500 407.500l3.500 1.500 3.500-1.500M712.500 410l3.500 1.500 3.500-1.500" fill="none" stroke="#dcdcdc" stroke-width="0.800"/>
<path d="M723.500 422.800l2.800 1.600v3.200l-2.800 1.600-2.800-1.600v-3.200z" fill="none" stroke="#c8c8c8" stroke-width="0.900"/><circle cx="723.500" cy="426" r="1.200" fill="none" stroke="#c8c8c8" stroke-width="0.800"/>
<path d="M789.500 424h5M789.500 426.300h5M789.500 428.600h5" stroke="#4e4f51" stroke-width="0.800"/>
<path d="M852 6.300l3.300-.5v3.200h-3.300zM855.900 5.700l4.100-.6v3.900h-4.100zM852 9.600h3.300v3.200l-3.300-.5zM855.900 9.600h4.100v3.900l-4.100-.6z" fill="#fff"/>
<circle cx="857" cy="25.500" r="2.600" fill="none" stroke="#e6e6e6" stroke-width="0.900"/><path d="M855.200 27.500l-2.700 2.800" stroke="#e6e6e6" stroke-width="1"/>
<rect x="852.800" y="42.800" width="5.400" height="5" fill="none" stroke="#e6e6e6" stroke-width="0.800"/><path d="M851 44h1.800M851 46.600h1.800M858.200 44h2M858.200 46.600h2" stroke="#e6e6e6" stroke-width="0.800"/>
<path d="M851.500 61.500h3.500l1 1h4.500v7h-9z" fill="#f5c84a"/><rect x="851.500" y="64" width="9" height="3.500" fill="#5ab0f0"/><rect x="851.500" y="67" width="9" height="1.800" fill="#e9b530"/>
<circle cx="856" cy="87.500" r="4.500" fill="#ff7139"/><circle cx="856.300" cy="88.300" r="2.500" fill="#7a3fd0"/><path d="M852 85.500a4.500 4.500 0 0 1 6-2.300c-2 0-3 1.500-2.500 3" fill="#ffbd2e"/>
<circle cx="856" cy="109" r="4.500" fill="#0c7bd6"/><path d="M851.700 108a4.500 4.500 0 0 1 8.700-.500c-2-1.300-4.500-.800-5 1.500z" fill="#35c1b0"/><path d="M855.300 109c-.500 2 1.500 3.500 4 2.500a4.500 4.500 0 0 1 -4 2c-1.500-1.500-1.500-3.500 0-4.500z" fill="#0a4f9a"/>
<circle cx="856" cy="130" r="4.500" fill="#7d4698"/><path d="M853 130a3 3 0 0 1 5.500-1.500" fill="none" stroke="#e8d8f5" stroke-width="1.100"/>
<rect x="854" y="149.500" width="4.500" height="4" fill="none" stroke="#e0245a" stroke-width="1"/><circle cx="852.800" cy="148.300" r="0.800" fill="#e0245a"/>
<circle cx="856" cy="173" r="4.300" fill="#d8232a"/><path d="M857.500 171.200h-2.200a1 1 0 0 0 0 1.800h1.400a1 1 0 0 1 0 1.800h-2.200" fill="none" stroke="#fff" stroke-width="0.900"/>
<ellipse cx="857" cy="194.500" rx="3.600" ry="3" fill="#ea7600"/><circle cx="857.500" cy="194.500" r="1.600" fill="#fff"/><circle cx="857.500" cy="194.500" r="0.900" fill="#265787"/><path d="M851.500 193.500h4M852.500 196l2-1" stroke="#ea7600" stroke-width="1"/>
<circle cx="855.500" cy="214.500" r="4.300" fill="none" stroke="#25d366" stroke-width="1.300"/><path d="M852 219l.7-2.500" stroke="#25d366" stroke-width="1.300"/><path d="M854 212.500c0 2 1.500 3.500 3.500 3.500" fill="none" stroke="#25d366" stroke-width="1.100"/><circle cx="861.500" cy="219.500" r="2.500" fill="#2a2b2d"/><text x="861.500" y="221.200" font-family="Liberation Sans,sans-serif" font-size="4" fill="#e8e8e8" text-anchor="middle">3</text>
<rect x="851.500" y="231.500" width="9" height="8.500" rx="1" fill="#001e36"/><text x="856" y="238" font-family="Liberation Sans,sans-serif" font-size="5.200" font-weight="bold" fill="#31a8ff" text-anchor="middle">Ps</text>
<rect x="851.500" y="252.500" width="9.500" height="9.500" rx="1" fill="#0b4f93"/><path d="M856.250 253.200q1.050 3 4.050 4.050q-3 1.050-4.050 4.050q-1.050-3-4.050-4.050q3-1.050 4.050-4.050z" fill="#fff" stroke="#fff" stroke-width="1.200" stroke-linejoin="round"/>
<ellipse cx="855.500" cy="279.500" rx="4.300" ry="3.300" fill="#e8e2d8"/><circle cx="853.500" cy="279" r="0.900" fill="#e03030"/><circle cx="855.500" cy="277.800" r="0.900" fill="#30a0e0"/><circle cx="857.500" cy="279" r="0.900" fill="#40c040"/><path d="M856 282.500l4.500-6.500" stroke="#e8a020" stroke-width="1.200"/>
<rect x="850.300" y="407.500" width="5" height="5" rx="1" fill="#d02020"/><rect x="858.500" y="407" width="5.500" height="5.500" rx="1" fill="#b8b8b8"/><path d="M860 411l2.500-2.800" stroke="#fff" stroke-width="0.900"/>
<rect x="850.500" y="419" width="5.500" height="4" fill="none" stroke="#e8e8e8" stroke-width="0.800"/><path d="M852 425h4" stroke="#e8e8e8" stroke-width="0.800"/><path d="M859 421h1.200l1.500-1.500v5l-1.500-1.500h-1.200z" fill="#e8e8e8"/><path d="M863 420v4" stroke="#e8e8e8" stroke-width="0.600"/>
<rect x="852.500" y="471.500" width="6.500" height="5" rx="0.600" fill="none" stroke="#e8e8e8" stroke-width="0.900"/><path d="M854 473.500h3.500M854 475h2.500" stroke="#e8e8e8" stroke-width="0.600"/><path d="M856 476.500v2l2-2" fill="#e8e8e8"/>
</svg>
</div>
</body></html>
